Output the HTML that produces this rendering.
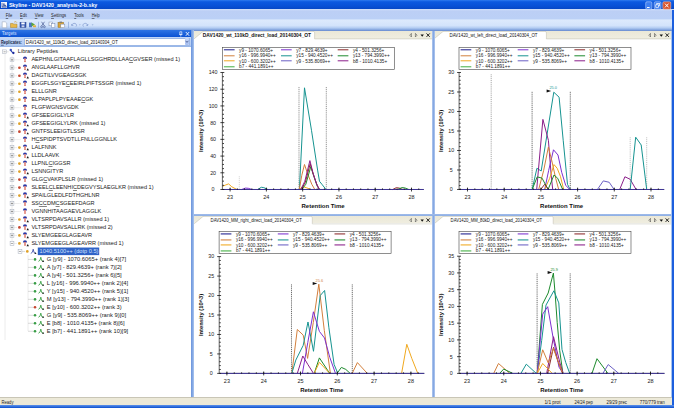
<!DOCTYPE html>
<html><head><meta charset="utf-8"><title>Skyline - DAV1420_analysis-2-b.sky</title>
<style>

html,body{margin:0;padding:0;}
body{width:674px;height:408px;overflow:hidden;background:#fff;font-family:"Liberation Sans", sans-serif;position:relative;}
.abs{position:absolute;}
.t{position:absolute;white-space:nowrap;line-height:1;color:#222;}
.t u{text-decoration-color:rgba(40,40,40,0.6);text-decoration-thickness:0.5px;}
#titlebar{left:0;top:0;width:674px;height:9.6px;background:linear-gradient(#2f7bef 0%,#0c59e0 18%,#0850d6 60%,#0644c0 100%);}
#menubar{left:0;top:9.4px;width:674px;height:9.6px;background:linear-gradient(#cfdef9 0%,#bccff5 22%,#bbd0f6 100%);}
#toolbar{left:0;top:18.8px;width:674px;height:12px;background:linear-gradient(#c6d9f8 0%,#dce9fc 10%,#d3e3fb 55%,#b3ccf2 74%,#84a5de 90%,#6589cf 100%);}
#tgt-head{left:0;top:30.3px;width:191.5px;height:6.7px;background:linear-gradient(#2f74e4,#0b52d3);}
#rep-row{left:0;top:37px;width:191.2px;height:9.7px;background:linear-gradient(#c3d7f7,#b5cdf3 80%,#8fb0e6);}
#combo{left:24px;top:37.7px;width:166px;height:8.2px;background:#fff;border:0.5px solid #9db8e6;box-sizing:border-box;}
#tree{left:0;top:46.5px;width:191px;height:350.5px;background:#fff;}
#vsplit{left:191.2px;top:30px;width:3.2px;height:367px;background:linear-gradient(90deg,#6a94dc,#8aade6 60%,#b0c9f0);}
#status{left:0;top:397px;width:671.5px;height:8.4px;background:#ece9d8;border-top:0.5px solid #c9c6b6;box-sizing:border-box;}
#botblue{left:0;top:405.3px;width:674px;height:2.7px;background:linear-gradient(#5f93ea,#0a4fd0);}
#rightblue{left:671.5px;top:10px;width:2.5px;height:398px;background:#1c5fde;}
.pane{background:#fff;}
.tabstrip{background:linear-gradient(#ebe8d7,#f0eee1);}

</style></head><body>
<div id="titlebar" class="abs"></div>
<div id="menubar" class="abs"></div>
<div id="toolbar" class="abs"></div>
<div id="rightblue" class="abs"></div>
<svg class="abs" style="left:0.9px;top:1.9px" width="6.2" height="5.8" viewBox="0 0 7.6 8" preserveAspectRatio="none"><rect x="0" y="0" width="7.6" height="8" fill="#f4f6fb"/><path d="M1.3 7 V1.2 M1.3 7 H6.8 M2.5 6.8 L3.6 2 L4.6 6 L5.4 4 L6.3 6.8" stroke="#1f3f94" stroke-width="0.9" fill="none"/></svg>
<svg class="abs" style="left:643px;top:0.5px" width="30" height="9" viewBox="0 0 30 9"><rect x="2.7" y="0.8" width="6.2" height="7.4" rx="1.2" fill="#3f7ff0" stroke="#cfdefc" stroke-width="0.5"/><rect x="4" y="6" width="2.6" height="1" fill="#fff"/><rect x="11.2" y="0.8" width="6.8" height="7.4" rx="1.2" fill="#3f7ff0" stroke="#cfdefc" stroke-width="0.5"/><rect x="13.8" y="2.4" width="2.8" height="2.5" fill="none" stroke="#fff" stroke-width="0.7"/><rect x="12.8" y="3.8" width="2.8" height="2.5" fill="#3f7ff0" stroke="#fff" stroke-width="0.7"/><rect x="19.8" y="0.8" width="8" height="7.4" rx="1.2" fill="#d9532c" stroke="#f6d9cf" stroke-width="0.5"/><path d="M22 2.6 L25.6 6.4 M25.6 2.6 L22 6.4" stroke="#fff" stroke-width="1"/></svg>
<svg class="abs" style="left:0;top:19px" width="110" height="11" viewBox="0 0 110 11"><g transform="translate(0,1.1) scale(1,0.84)"><path d="M2.2 2 h3 l1.5 1.5 v5.5 h-4.5z" fill="#fff" stroke="#8a97ad" stroke-width="0.5"/><path d="M10.5 4 h2.5 l0.8 0.8 h3.2 v4 h-6.5z" fill="#e9b94a" stroke="#a8781a" stroke-width="0.5"/><path d="M14 2.5 l2 -0.8 l1 1.5" stroke="#c8922a" stroke-width="0.6" fill="none"/><rect x="20" y="2.5" width="6" height="6.3" fill="#3659b4" stroke="#223a82" stroke-width="0.5"/><rect x="21.3" y="2.8" width="3.4" height="2.3" fill="#fff"/><rect x="21.6" y="6.3" width="2.8" height="2.2" fill="#cdd6ee"/><rect x="29" y="3" width="3" height="5.5" fill="#4a74c9"/><path d="M31.5 3 l3.5 2.2 l-3.5 2.5z" fill="#59a83a"/><rect x="33" y="6.2" width="3" height="2.3" fill="#e1b23c"/><rect x="38.4" y="2" width="0.6" height="7.5" fill="#7f9fd6"/><path d="M41.5 2 l3 5 M44.5 2 l-3 5" stroke="#3b4f8a" stroke-width="0.7"/><circle cx="41.6" cy="8" r="1" fill="none" stroke="#3b4f8a" stroke-width="0.6"/><circle cx="44.4" cy="8" r="1" fill="none" stroke="#3b4f8a" stroke-width="0.6"/><rect x="49" y="2.3" width="3.6" height="4.5" fill="#fff" stroke="#6d7fa8" stroke-width="0.5"/><rect x="51.3" y="4.2" width="3.6" height="4.5" fill="#fff" stroke="#6d7fa8" stroke-width="0.5"/><rect x="58" y="2.5" width="5.5" height="6.3" fill="#d9a63d" stroke="#8d6a1f" stroke-width="0.5"/><rect x="59.5" y="1.8" width="2.5" height="1.4" fill="#777"/><rect x="60.8" y="4.8" width="4" height="4.3" fill="#fff" stroke="#6d7fa8" stroke-width="0.5"/><rect x="68" y="2" width="0.6" height="7.5" fill="#7f9fd6"/><path d="M72 6.5 a2.3 2.3 0 1 1 4 1.2" stroke="#8aa3d3" stroke-width="0.9" fill="none"/><path d="M71 4.5 l0.6 2.6 l2.3 -1z" fill="#8aa3d3"/><path d="M78.8 5.2 h2 l-1 1.2z" fill="#8aa3d3"/><path d="M87.5 6.5 a2.3 2.3 0 1 0 -4 1.2" stroke="#8aa3d3" stroke-width="0.9" fill="none"/><path d="M88.5 4.5 l-0.6 2.6 l-2.3 -1z" fill="#8aa3d3"/><path d="M91.6 5.2 h2 l-1 1.2z" fill="#8aa3d3"/></g></svg>
<div id="tgt-head" class="abs"></div>
<svg class="abs" style="left:177px;top:30.5px" width="14" height="6" viewBox="0 0 14 6"><path d="M2.8 0.8 h2 v2.6 h-2z M2.2 3.5 h3.2 M3.8 3.5 v2" stroke="#e8f0ff" stroke-width="0.7" fill="none"/><path d="M8.8 1 l3.4 3.8 M12.2 1 l-3.4 3.8" stroke="#f4f8ff" stroke-width="0.9"/></svg>
<div id="rep-row" class="abs"></div>
<div id="combo" class="abs"></div>
<div class="abs" style="left:184.6px;top:38.4px;width:4.8px;height:6.8px;background:linear-gradient(#c9d9fa,#a4bdf0);border-radius:1px;"></div>
<svg class="abs" style="left:184px;top:38.4px" width="6" height="7" viewBox="0 0 6 7"><path d="M1.6 2.8 l1.4 1.6 l1.4 -1.6" stroke="#3a4f86" stroke-width="0.8" fill="none"/></svg>
<div id="tree" class="abs"></div>
<div id="vsplit" class="abs"></div>
<svg class="abs" style="left:0;top:46.5px" width="191" height="350" viewBox="0 46.5 191 350">
<g stroke="#b5b5b5" stroke-width="0.5" stroke-dasharray="0.5 0.5" fill="none">
<path d="M5 54 V339.5"/>
<path d="M12 56 V243"/>
<path d="M28 255 V331 "/>
</g>
<rect x="2.6999999999999997" y="49.4" width="3.8" height="3.8" fill="#fff" stroke="#a4abba" stroke-width="0.5"/>
<path d="M3.4999999999999996 51.3 H5.699999999999999" stroke="#555" stroke-width="0.5"/>
<path d="M6.6 51.3 H8.6" stroke="#c8c8c8" stroke-width="0.5"/>
<circle cx="10.8" cy="49.4" r="1.2" fill="#3a52c0"/><path d="M11 50.3 l2 2.2" stroke="#2a3fb0" stroke-width="1.1"/><circle cx="13.4" cy="52.5" r="1.15" fill="#1d2c9c"/>
<rect x="10.1" y="57.385" width="3.8" height="3.8" fill="#fff" stroke="#a4abba" stroke-width="0.5"/>
<path d="M10.9 59.285 H13.1" stroke="#555" stroke-width="0.5"/>
<path d="M12 58.184999999999995 V60.385" stroke="#555" stroke-width="0.5"/>
<path d="M14 59.285 H21" stroke="#c4c4c4" stroke-width="0.5" stroke-dasharray="0.6 0.5"/>
<path d="M22.9 58.385 Q22.9 56.084999999999994 25 56.084999999999994 Q27.1 56.084999999999994 27.1 58.385 Q25 57.684999999999995 22.9 58.385Z" fill="#2a36a4"/>
<rect x="24.3" y="57.985" width="1.4" height="3.6" fill="#d8594a"/>
<rect x="24.3" y="59.485" width="1.4" height="0.6" fill="#f6dcd6"/>
<rect x="10.1" y="65.36999999999999" width="3.8" height="3.8" fill="#fff" stroke="#a4abba" stroke-width="0.5"/>
<path d="M10.9 67.27 H13.1" stroke="#555" stroke-width="0.5"/>
<path d="M12 66.17 V68.36999999999999" stroke="#555" stroke-width="0.5"/>
<path d="M14 67.27 H17" stroke="#c4c4c4" stroke-width="0.5" stroke-dasharray="0.6 0.5"/>
<circle cx="19.4" cy="67.27" r="1.35" fill="#c4452f"/>
<path d="M22.9 66.36999999999999 Q22.9 64.07 25 64.07 Q27.1 64.07 27.1 66.36999999999999 Q25 65.67 22.9 66.36999999999999Z" fill="#2a36a4"/>
<rect x="24.3" y="65.97" width="1.4" height="3.6" fill="#d8594a"/>
<rect x="24.3" y="67.47" width="1.4" height="0.6" fill="#f6dcd6"/>
<path d="M26.5 69.97 l1.3 -2.2 l1.1 2.2z" fill="#111"/>
<rect x="10.1" y="73.35499999999999" width="3.8" height="3.8" fill="#fff" stroke="#a4abba" stroke-width="0.5"/>
<path d="M10.9 75.255 H13.1" stroke="#555" stroke-width="0.5"/>
<path d="M12 74.155 V76.35499999999999" stroke="#555" stroke-width="0.5"/>
<path d="M14 75.255 H17" stroke="#c4c4c4" stroke-width="0.5" stroke-dasharray="0.6 0.5"/>
<circle cx="19.4" cy="75.255" r="1.35" fill="#c4452f"/>
<path d="M22.9 74.35499999999999 Q22.9 72.05499999999999 25 72.05499999999999 Q27.1 72.05499999999999 27.1 74.35499999999999 Q25 73.655 22.9 74.35499999999999Z" fill="#2a36a4"/>
<rect x="24.3" y="73.955" width="1.4" height="3.6" fill="#d8594a"/>
<rect x="24.3" y="75.455" width="1.4" height="0.6" fill="#f6dcd6"/>
<path d="M26.5 77.955 l1.3 -2.2 l1.1 2.2z" fill="#111"/>
<rect x="10.1" y="81.33999999999999" width="3.8" height="3.8" fill="#fff" stroke="#a4abba" stroke-width="0.5"/>
<path d="M10.9 83.24 H13.1" stroke="#555" stroke-width="0.5"/>
<path d="M12 82.14 V84.33999999999999" stroke="#555" stroke-width="0.5"/>
<path d="M14 83.24 H17" stroke="#c4c4c4" stroke-width="0.5" stroke-dasharray="0.6 0.5"/>
<circle cx="19.4" cy="83.24" r="1.35" fill="#dfa128"/>
<path d="M22.9 82.33999999999999 Q22.9 80.03999999999999 25 80.03999999999999 Q27.1 80.03999999999999 27.1 82.33999999999999 Q25 81.64 22.9 82.33999999999999Z" fill="#2a36a4"/>
<rect x="24.3" y="81.94" width="1.4" height="3.6" fill="#d8594a"/>
<rect x="24.3" y="83.44" width="1.4" height="0.6" fill="#f6dcd6"/>
<rect x="10.1" y="89.32499999999999" width="3.8" height="3.8" fill="#fff" stroke="#a4abba" stroke-width="0.5"/>
<path d="M10.9 91.225 H13.1" stroke="#555" stroke-width="0.5"/>
<path d="M12 90.125 V92.32499999999999" stroke="#555" stroke-width="0.5"/>
<path d="M14 91.225 H17" stroke="#c4c4c4" stroke-width="0.5" stroke-dasharray="0.6 0.5"/>
<circle cx="19.4" cy="91.225" r="1.35" fill="#dfa128"/>
<path d="M22.9 90.32499999999999 Q22.9 88.02499999999999 25 88.02499999999999 Q27.1 88.02499999999999 27.1 90.32499999999999 Q25 89.625 22.9 90.32499999999999Z" fill="#2a36a4"/>
<rect x="24.3" y="89.925" width="1.4" height="3.6" fill="#d8594a"/>
<rect x="24.3" y="91.425" width="1.4" height="0.6" fill="#f6dcd6"/>
<rect x="10.1" y="97.31" width="3.8" height="3.8" fill="#fff" stroke="#a4abba" stroke-width="0.5"/>
<path d="M10.9 99.21000000000001 H13.1" stroke="#555" stroke-width="0.5"/>
<path d="M12 98.11000000000001 V100.31" stroke="#555" stroke-width="0.5"/>
<path d="M14 99.21000000000001 H17" stroke="#c4c4c4" stroke-width="0.5" stroke-dasharray="0.6 0.5"/>
<circle cx="19.4" cy="99.21000000000001" r="1.35" fill="#dfa128"/>
<path d="M22.9 98.31 Q22.9 96.01 25 96.01 Q27.1 96.01 27.1 98.31 Q25 97.61000000000001 22.9 98.31Z" fill="#2a36a4"/>
<rect x="24.3" y="97.91000000000001" width="1.4" height="3.6" fill="#d8594a"/>
<rect x="24.3" y="99.41000000000001" width="1.4" height="0.6" fill="#f6dcd6"/>
<rect x="10.1" y="105.29499999999999" width="3.8" height="3.8" fill="#fff" stroke="#a4abba" stroke-width="0.5"/>
<path d="M10.9 107.195 H13.1" stroke="#555" stroke-width="0.5"/>
<path d="M12 106.095 V108.29499999999999" stroke="#555" stroke-width="0.5"/>
<path d="M14 107.195 H21" stroke="#c4c4c4" stroke-width="0.5" stroke-dasharray="0.6 0.5"/>
<path d="M22.9 106.29499999999999 Q22.9 103.99499999999999 25 103.99499999999999 Q27.1 103.99499999999999 27.1 106.29499999999999 Q25 105.595 22.9 106.29499999999999Z" fill="#2a36a4"/>
<rect x="24.3" y="105.895" width="1.4" height="3.6" fill="#d8594a"/>
<rect x="24.3" y="107.395" width="1.4" height="0.6" fill="#f6dcd6"/>
<rect x="10.1" y="113.28" width="3.8" height="3.8" fill="#fff" stroke="#a4abba" stroke-width="0.5"/>
<path d="M10.9 115.18 H13.1" stroke="#555" stroke-width="0.5"/>
<path d="M12 114.08000000000001 V116.28" stroke="#555" stroke-width="0.5"/>
<path d="M14 115.18 H17" stroke="#c4c4c4" stroke-width="0.5" stroke-dasharray="0.6 0.5"/>
<circle cx="19.4" cy="115.18" r="1.35" fill="#dfa128"/>
<path d="M22.9 114.28 Q22.9 111.98 25 111.98 Q27.1 111.98 27.1 114.28 Q25 113.58000000000001 22.9 114.28Z" fill="#2a36a4"/>
<rect x="24.3" y="113.88000000000001" width="1.4" height="3.6" fill="#d8594a"/>
<rect x="24.3" y="115.38000000000001" width="1.4" height="0.6" fill="#f6dcd6"/>
<path d="M26.5 117.88000000000001 l1.3 -2.2 l1.1 2.2z" fill="#111"/>
<rect x="10.1" y="121.265" width="3.8" height="3.8" fill="#fff" stroke="#a4abba" stroke-width="0.5"/>
<path d="M10.9 123.165 H13.1" stroke="#555" stroke-width="0.5"/>
<path d="M12 122.06500000000001 V124.265" stroke="#555" stroke-width="0.5"/>
<path d="M14 123.165 H17" stroke="#c4c4c4" stroke-width="0.5" stroke-dasharray="0.6 0.5"/>
<circle cx="19.4" cy="123.165" r="1.35" fill="#dfa128"/>
<path d="M22.9 122.265 Q22.9 119.965 25 119.965 Q27.1 119.965 27.1 122.265 Q25 121.56500000000001 22.9 122.265Z" fill="#2a36a4"/>
<rect x="24.3" y="121.86500000000001" width="1.4" height="3.6" fill="#d8594a"/>
<rect x="24.3" y="123.36500000000001" width="1.4" height="0.6" fill="#f6dcd6"/>
<path d="M26.5 125.86500000000001 l1.3 -2.2 l1.1 2.2z" fill="#111"/>
<rect x="10.1" y="129.25" width="3.8" height="3.8" fill="#fff" stroke="#a4abba" stroke-width="0.5"/>
<path d="M10.9 131.15 H13.1" stroke="#555" stroke-width="0.5"/>
<path d="M12 130.05 V132.25" stroke="#555" stroke-width="0.5"/>
<path d="M14 131.15 H17" stroke="#c4c4c4" stroke-width="0.5" stroke-dasharray="0.6 0.5"/>
<circle cx="19.4" cy="131.15" r="1.35" fill="#c4452f"/>
<path d="M22.9 130.25 Q22.9 127.95 25 127.95 Q27.1 127.95 27.1 130.25 Q25 129.55 22.9 130.25Z" fill="#2a36a4"/>
<rect x="24.3" y="129.85" width="1.4" height="3.6" fill="#d8594a"/>
<rect x="24.3" y="131.35" width="1.4" height="0.6" fill="#f6dcd6"/>
<path d="M26.5 133.85 l1.3 -2.2 l1.1 2.2z" fill="#111"/>
<rect x="10.1" y="137.23499999999999" width="3.8" height="3.8" fill="#fff" stroke="#a4abba" stroke-width="0.5"/>
<path d="M10.9 139.135 H13.1" stroke="#555" stroke-width="0.5"/>
<path d="M12 138.035 V140.23499999999999" stroke="#555" stroke-width="0.5"/>
<path d="M14 139.135 H21" stroke="#c4c4c4" stroke-width="0.5" stroke-dasharray="0.6 0.5"/>
<path d="M22.9 138.23499999999999 Q22.9 135.935 25 135.935 Q27.1 135.935 27.1 138.23499999999999 Q25 137.535 22.9 138.23499999999999Z" fill="#2a36a4"/>
<rect x="24.3" y="137.83499999999998" width="1.4" height="3.6" fill="#d8594a"/>
<rect x="24.3" y="139.33499999999998" width="1.4" height="0.6" fill="#f6dcd6"/>
<rect x="10.1" y="145.22" width="3.8" height="3.8" fill="#fff" stroke="#a4abba" stroke-width="0.5"/>
<path d="M10.9 147.12 H13.1" stroke="#555" stroke-width="0.5"/>
<path d="M12 146.02 V148.22" stroke="#555" stroke-width="0.5"/>
<path d="M14 147.12 H17" stroke="#c4c4c4" stroke-width="0.5" stroke-dasharray="0.6 0.5"/>
<circle cx="19.4" cy="147.12" r="1.35" fill="#dfa128"/>
<path d="M22.9 146.22 Q22.9 143.92000000000002 25 143.92000000000002 Q27.1 143.92000000000002 27.1 146.22 Q25 145.52 22.9 146.22Z" fill="#2a36a4"/>
<rect x="24.3" y="145.82" width="1.4" height="3.6" fill="#d8594a"/>
<rect x="24.3" y="147.32" width="1.4" height="0.6" fill="#f6dcd6"/>
<path d="M26.5 149.82 l1.3 -2.2 l1.1 2.2z" fill="#111"/>
<rect x="10.1" y="153.205" width="3.8" height="3.8" fill="#fff" stroke="#a4abba" stroke-width="0.5"/>
<path d="M10.9 155.10500000000002 H13.1" stroke="#555" stroke-width="0.5"/>
<path d="M12 154.00500000000002 V156.205" stroke="#555" stroke-width="0.5"/>
<path d="M14 155.10500000000002 H17" stroke="#c4c4c4" stroke-width="0.5" stroke-dasharray="0.6 0.5"/>
<circle cx="19.4" cy="155.10500000000002" r="1.35" fill="#dfa128"/>
<path d="M22.9 154.205 Q22.9 151.90500000000003 25 151.90500000000003 Q27.1 151.90500000000003 27.1 154.205 Q25 153.50500000000002 22.9 154.205Z" fill="#2a36a4"/>
<rect x="24.3" y="153.805" width="1.4" height="3.6" fill="#d8594a"/>
<rect x="24.3" y="155.305" width="1.4" height="0.6" fill="#f6dcd6"/>
<path d="M26.5 157.805 l1.3 -2.2 l1.1 2.2z" fill="#111"/>
<rect x="10.1" y="161.19" width="3.8" height="3.8" fill="#fff" stroke="#a4abba" stroke-width="0.5"/>
<path d="M10.9 163.09 H13.1" stroke="#555" stroke-width="0.5"/>
<path d="M12 161.99 V164.19" stroke="#555" stroke-width="0.5"/>
<path d="M14 163.09 H17" stroke="#c4c4c4" stroke-width="0.5" stroke-dasharray="0.6 0.5"/>
<circle cx="19.4" cy="163.09" r="1.35" fill="#dfa128"/>
<path d="M22.9 162.19 Q22.9 159.89000000000001 25 159.89000000000001 Q27.1 159.89000000000001 27.1 162.19 Q25 161.49 22.9 162.19Z" fill="#2a36a4"/>
<rect x="24.3" y="161.79" width="1.4" height="3.6" fill="#d8594a"/>
<rect x="24.3" y="163.29" width="1.4" height="0.6" fill="#f6dcd6"/>
<rect x="10.1" y="169.17499999999998" width="3.8" height="3.8" fill="#fff" stroke="#a4abba" stroke-width="0.5"/>
<path d="M10.9 171.075 H13.1" stroke="#555" stroke-width="0.5"/>
<path d="M12 169.975 V172.17499999999998" stroke="#555" stroke-width="0.5"/>
<path d="M14 171.075 H17" stroke="#c4c4c4" stroke-width="0.5" stroke-dasharray="0.6 0.5"/>
<circle cx="19.4" cy="171.075" r="1.35" fill="#dfa128"/>
<path d="M22.9 170.17499999999998 Q22.9 167.875 25 167.875 Q27.1 167.875 27.1 170.17499999999998 Q25 169.475 22.9 170.17499999999998Z" fill="#2a36a4"/>
<rect x="24.3" y="169.77499999999998" width="1.4" height="3.6" fill="#d8594a"/>
<rect x="24.3" y="171.27499999999998" width="1.4" height="0.6" fill="#f6dcd6"/>
<path d="M26.5 173.77499999999998 l1.3 -2.2 l1.1 2.2z" fill="#111"/>
<rect x="10.1" y="177.16" width="3.8" height="3.8" fill="#fff" stroke="#a4abba" stroke-width="0.5"/>
<path d="M10.9 179.06 H13.1" stroke="#555" stroke-width="0.5"/>
<path d="M12 177.96 V180.16" stroke="#555" stroke-width="0.5"/>
<path d="M14 179.06 H17" stroke="#c4c4c4" stroke-width="0.5" stroke-dasharray="0.6 0.5"/>
<circle cx="19.4" cy="179.06" r="1.35" fill="#c4452f"/>
<path d="M22.9 178.16 Q22.9 175.86 25 175.86 Q27.1 175.86 27.1 178.16 Q25 177.46 22.9 178.16Z" fill="#2a36a4"/>
<rect x="24.3" y="177.76" width="1.4" height="3.6" fill="#d8594a"/>
<rect x="24.3" y="179.26" width="1.4" height="0.6" fill="#f6dcd6"/>
<rect x="10.1" y="185.145" width="3.8" height="3.8" fill="#fff" stroke="#a4abba" stroke-width="0.5"/>
<path d="M10.9 187.04500000000002 H13.1" stroke="#555" stroke-width="0.5"/>
<path d="M12 185.94500000000002 V188.145" stroke="#555" stroke-width="0.5"/>
<path d="M14 187.04500000000002 H17" stroke="#c4c4c4" stroke-width="0.5" stroke-dasharray="0.6 0.5"/>
<circle cx="19.4" cy="187.04500000000002" r="1.35" fill="#c4452f"/>
<path d="M22.9 186.145 Q22.9 183.84500000000003 25 183.84500000000003 Q27.1 183.84500000000003 27.1 186.145 Q25 185.44500000000002 22.9 186.145Z" fill="#2a36a4"/>
<rect x="24.3" y="185.745" width="1.4" height="3.6" fill="#d8594a"/>
<rect x="24.3" y="187.245" width="1.4" height="0.6" fill="#f6dcd6"/>
<rect x="10.1" y="193.13000000000002" width="3.8" height="3.8" fill="#fff" stroke="#a4abba" stroke-width="0.5"/>
<path d="M10.9 195.03000000000003 H13.1" stroke="#555" stroke-width="0.5"/>
<path d="M12 193.93000000000004 V196.13000000000002" stroke="#555" stroke-width="0.5"/>
<path d="M14 195.03000000000003 H17" stroke="#c4c4c4" stroke-width="0.5" stroke-dasharray="0.6 0.5"/>
<circle cx="19.4" cy="195.03000000000003" r="1.35" fill="#dfa128"/>
<path d="M22.9 194.13000000000002 Q22.9 191.83000000000004 25 191.83000000000004 Q27.1 191.83000000000004 27.1 194.13000000000002 Q25 193.43000000000004 22.9 194.13000000000002Z" fill="#2a36a4"/>
<rect x="24.3" y="193.73000000000002" width="1.4" height="3.6" fill="#d8594a"/>
<rect x="24.3" y="195.23000000000002" width="1.4" height="0.6" fill="#f6dcd6"/>
<path d="M26.5 197.73000000000002 l1.3 -2.2 l1.1 2.2z" fill="#111"/>
<rect x="10.1" y="201.11499999999998" width="3.8" height="3.8" fill="#fff" stroke="#a4abba" stroke-width="0.5"/>
<path d="M10.9 203.015 H13.1" stroke="#555" stroke-width="0.5"/>
<path d="M12 201.915 V204.11499999999998" stroke="#555" stroke-width="0.5"/>
<path d="M14 203.015 H21" stroke="#c4c4c4" stroke-width="0.5" stroke-dasharray="0.6 0.5"/>
<path d="M22.9 202.11499999999998 Q22.9 199.815 25 199.815 Q27.1 199.815 27.1 202.11499999999998 Q25 201.415 22.9 202.11499999999998Z" fill="#2a36a4"/>
<rect x="24.3" y="201.71499999999997" width="1.4" height="3.6" fill="#d8594a"/>
<rect x="24.3" y="203.21499999999997" width="1.4" height="0.6" fill="#f6dcd6"/>
<rect x="10.1" y="209.1" width="3.8" height="3.8" fill="#fff" stroke="#a4abba" stroke-width="0.5"/>
<path d="M10.9 211.0 H13.1" stroke="#555" stroke-width="0.5"/>
<path d="M12 209.9 V212.1" stroke="#555" stroke-width="0.5"/>
<path d="M14 211.0 H21" stroke="#c4c4c4" stroke-width="0.5" stroke-dasharray="0.6 0.5"/>
<path d="M22.9 210.1 Q22.9 207.8 25 207.8 Q27.1 207.8 27.1 210.1 Q25 209.4 22.9 210.1Z" fill="#2a36a4"/>
<rect x="24.3" y="209.7" width="1.4" height="3.6" fill="#d8594a"/>
<rect x="24.3" y="211.2" width="1.4" height="0.6" fill="#f6dcd6"/>
<rect x="10.1" y="217.085" width="3.8" height="3.8" fill="#fff" stroke="#a4abba" stroke-width="0.5"/>
<path d="M10.9 218.985 H13.1" stroke="#555" stroke-width="0.5"/>
<path d="M12 217.88500000000002 V220.085" stroke="#555" stroke-width="0.5"/>
<path d="M14 218.985 H17" stroke="#c4c4c4" stroke-width="0.5" stroke-dasharray="0.6 0.5"/>
<circle cx="19.4" cy="218.985" r="1.35" fill="#dfa128"/>
<path d="M22.9 218.085 Q22.9 215.78500000000003 25 215.78500000000003 Q27.1 215.78500000000003 27.1 218.085 Q25 217.38500000000002 22.9 218.085Z" fill="#2a36a4"/>
<rect x="24.3" y="217.685" width="1.4" height="3.6" fill="#d8594a"/>
<rect x="24.3" y="219.185" width="1.4" height="0.6" fill="#f6dcd6"/>
<path d="M26.5 221.685 l1.3 -2.2 l1.1 2.2z" fill="#111"/>
<rect x="10.1" y="225.07000000000002" width="3.8" height="3.8" fill="#fff" stroke="#a4abba" stroke-width="0.5"/>
<path d="M10.9 226.97000000000003 H13.1" stroke="#555" stroke-width="0.5"/>
<path d="M12 225.87000000000003 V228.07000000000002" stroke="#555" stroke-width="0.5"/>
<path d="M14 226.97000000000003 H17" stroke="#c4c4c4" stroke-width="0.5" stroke-dasharray="0.6 0.5"/>
<circle cx="19.4" cy="226.97000000000003" r="1.35" fill="#c4452f"/>
<path d="M22.9 226.07000000000002 Q22.9 223.77000000000004 25 223.77000000000004 Q27.1 223.77000000000004 27.1 226.07000000000002 Q25 225.37000000000003 22.9 226.07000000000002Z" fill="#2a36a4"/>
<rect x="24.3" y="225.67000000000002" width="1.4" height="3.6" fill="#d8594a"/>
<rect x="24.3" y="227.17000000000002" width="1.4" height="0.6" fill="#f6dcd6"/>
<path d="M26.5 229.67000000000002 l1.3 -2.2 l1.1 2.2z" fill="#111"/>
<rect x="10.1" y="233.05499999999998" width="3.8" height="3.8" fill="#fff" stroke="#a4abba" stroke-width="0.5"/>
<path d="M10.9 234.95499999999998 H13.1" stroke="#555" stroke-width="0.5"/>
<path d="M12 233.855 V236.05499999999998" stroke="#555" stroke-width="0.5"/>
<path d="M14 234.95499999999998 H17" stroke="#c4c4c4" stroke-width="0.5" stroke-dasharray="0.6 0.5"/>
<circle cx="19.4" cy="234.95499999999998" r="1.35" fill="#dfa128"/>
<path d="M22.9 234.05499999999998 Q22.9 231.755 25 231.755 Q27.1 231.755 27.1 234.05499999999998 Q25 233.355 22.9 234.05499999999998Z" fill="#2a36a4"/>
<rect x="24.3" y="233.65499999999997" width="1.4" height="3.6" fill="#d8594a"/>
<rect x="24.3" y="235.15499999999997" width="1.4" height="0.6" fill="#f6dcd6"/>
<path d="M26.5 237.65499999999997 l1.3 -2.2 l1.1 2.2z" fill="#111"/>
<rect x="10.1" y="241.04" width="3.8" height="3.8" fill="#fff" stroke="#a4abba" stroke-width="0.5"/>
<path d="M10.9 242.94 H13.1" stroke="#555" stroke-width="0.5"/>
<path d="M14 242.94 H17" stroke="#c4c4c4" stroke-width="0.5" stroke-dasharray="0.6 0.5"/>
<circle cx="19.4" cy="242.94" r="1.35" fill="#dfa128"/>
<path d="M22.9 242.04 Q22.9 239.74 25 239.74 Q27.1 239.74 27.1 242.04 Q25 241.34 22.9 242.04Z" fill="#2a36a4"/>
<rect x="24.3" y="241.64" width="1.4" height="3.6" fill="#d8594a"/>
<rect x="24.3" y="243.14" width="1.4" height="0.6" fill="#f6dcd6"/>
<path d="M26.5 245.64 l1.3 -2.2 l1.1 2.2z" fill="#111"/>
<rect x="18.1" y="249.025" width="3.8" height="3.8" fill="#fff" stroke="#a4abba" stroke-width="0.5"/>
<path d="M18.9 250.925 H21.1" stroke="#555" stroke-width="0.5"/>
<path d="M22 250.925 H25" stroke="#b5b5b5" stroke-width="0.5"/>
<circle cx="27.3" cy="250.925" r="1.35" fill="#dfa128"/>
<path d="M30.799999999999997 252.925 L32.4 251.72500000000002 L33.199999999999996 248.72500000000002 L34.1 252.125 L36.0 252.925" stroke="#2c3ea0" stroke-width="0.8" fill="none"/>
<path d="M34.4 253.425 l1.1 -1.8 l1 1.8z" fill="#222"/>
<rect x="37.8" y="247.025" width="61.4" height="7.6" fill="#2f62c6"/>
<path d="M28 258.91 H33" stroke="#b5b5b5" stroke-width="0.5"/>
<circle cx="35" cy="258.91" r="1.3" fill="#379c45"/>
<path d="M38.4 260.91 L40 259.71000000000004 L40.8 256.71000000000004 L41.7 260.11 L43.6 260.91" stroke="#2f9a3a" stroke-width="0.8" fill="none"/>
<path d="M42 261.41 l1.1 -1.8 l1 1.8z" fill="#222"/>
<path d="M28 266.895 H33" stroke="#b5b5b5" stroke-width="0.5"/>
<circle cx="35" cy="266.895" r="1.3" fill="#379c45"/>
<path d="M38.4 268.895 L40 267.695 L40.8 264.695 L41.7 268.09499999999997 L43.6 268.895" stroke="#2f9a3a" stroke-width="0.8" fill="none"/>
<path d="M42 269.395 l1.1 -1.8 l1 1.8z" fill="#222"/>
<path d="M28 274.88 H33" stroke="#b5b5b5" stroke-width="0.5"/>
<circle cx="35" cy="274.88" r="1.3" fill="#379c45"/>
<path d="M38.4 276.88 L40 275.68 L40.8 272.68 L41.7 276.08 L43.6 276.88" stroke="#2f9a3a" stroke-width="0.8" fill="none"/>
<path d="M42 277.38 l1.1 -1.8 l1 1.8z" fill="#222"/>
<path d="M28 282.865 H33" stroke="#b5b5b5" stroke-width="0.5"/>
<circle cx="35" cy="282.865" r="1.3" fill="#379c45"/>
<path d="M38.4 284.865 L40 283.665 L40.8 280.665 L41.7 284.065 L43.6 284.865" stroke="#2f9a3a" stroke-width="0.8" fill="none"/>
<path d="M42 285.365 l1.1 -1.8 l1 1.8z" fill="#222"/>
<path d="M28 290.85 H33" stroke="#b5b5b5" stroke-width="0.5"/>
<circle cx="35" cy="290.85" r="1.3" fill="#379c45"/>
<path d="M38.4 292.85 L40 291.65000000000003 L40.8 288.65000000000003 L41.7 292.05 L43.6 292.85" stroke="#2f9a3a" stroke-width="0.8" fill="none"/>
<path d="M42 293.35 l1.1 -1.8 l1 1.8z" fill="#222"/>
<path d="M28 298.835 H33" stroke="#b5b5b5" stroke-width="0.5"/>
<circle cx="35" cy="298.835" r="1.3" fill="#379c45"/>
<path d="M38.4 300.835 L40 299.635 L40.8 296.635 L41.7 300.03499999999997 L43.6 300.835" stroke="#2f9a3a" stroke-width="0.8" fill="none"/>
<path d="M42 301.335 l1.1 -1.8 l1 1.8z" fill="#222"/>
<path d="M28 306.82 H33" stroke="#b5b5b5" stroke-width="0.5"/>
<circle cx="35" cy="306.82" r="1.3" fill="#c4452f"/>
<path d="M38.4 308.82 L40 307.62 L40.8 304.62 L41.7 308.02 L43.6 308.82" stroke="#2f9a3a" stroke-width="0.8" fill="none"/>
<path d="M42 309.32 l1.1 -1.8 l1 1.8z" fill="#222"/>
<path d="M28 314.805 H33" stroke="#b5b5b5" stroke-width="0.5"/>
<circle cx="35" cy="314.805" r="1.3" fill="#379c45"/>
<path d="M38.4 316.805 L40 315.605 L40.8 312.605 L41.7 316.005 L43.6 316.805" stroke="#2f9a3a" stroke-width="0.8" fill="none"/>
<path d="M42 317.305 l1.1 -1.8 l1 1.8z" fill="#222"/>
<path d="M28 322.79 H33" stroke="#b5b5b5" stroke-width="0.5"/>
<circle cx="35" cy="322.79" r="1.3" fill="#379c45"/>
<path d="M38.4 324.79 L40 323.59000000000003 L40.8 320.59000000000003 L41.7 323.99 L43.6 324.79" stroke="#2f9a3a" stroke-width="0.8" fill="none"/>
<path d="M42 325.29 l1.1 -1.8 l1 1.8z" fill="#222"/>
<path d="M28 330.77500000000003 H33" stroke="#b5b5b5" stroke-width="0.5"/>
<circle cx="35" cy="330.77500000000003" r="1.3" fill="#379c45"/>
<path d="M38.4 332.77500000000003 L40 331.57500000000005 L40.8 328.57500000000005 L41.7 331.975 L43.6 332.77500000000003" stroke="#2f9a3a" stroke-width="0.8" fill="none"/>
<path d="M42 333.27500000000003 l1.1 -1.8 l1 1.8z" fill="#222"/>
</svg>
<div id="status" class="abs"></div>
<div id="botblue" class="abs"></div>
<div class="abs tabstrip" style="left:194.2px;top:30.7px;width:238.3px;height:8.2px;"></div>
<div class="abs pane" style="left:194.2px;top:38.5px;width:238.3px;height:174.79999999999998px;"></div>
<svg class="abs" style="left:194.2px;top:30.7px" width="238.3" height="182.6" viewBox="194.2 30.7 238.3 182.6">
<path d="M194.2 38.6 L194.2 38.6 L202.6 31.7 Q203.2 31.099999999999998 204.2 31.099999999999998 L313.3 31.099999999999998 Q314.8 31.099999999999998 314.8 32.4 L314.8 38.6 L432.5 38.6 L432.5 39.3 L194.2 39.3Z" fill="#fff"/>
<path d="M194.2 38.6 L194.2 38.6 L202.6 31.7 Q203.2 31.099999999999998 204.2 31.099999999999998 L313.3 31.099999999999998 Q314.8 31.099999999999998 314.8 32.4 L314.8 38.6 L432.5 38.6" fill="none" stroke="#bdbaa9" stroke-width="0.5"/>
<path d="M409.9 34.9 l1.7 -1.8 v3.6z M417.3 34.9 l-1.7 -1.8 v3.6z" fill="none" stroke="#444" stroke-width="0.55"/>
<path d="M420.7 34.3 h3.4 l-1.7 2.1z" fill="#111"/>
<path d="M426.7 33.1 l3.3 3.5 M430.0 33.1 l-3.3 3.5" stroke="#111" stroke-width="0.9"/>
<rect x="222.5" y="47.2" width="172" height="22" fill="#fff" stroke="#444" stroke-width="0.6"/>
<path d="M224.1 49.5 H234.8" stroke="#1a1a8c" stroke-width="1" opacity="1"/>
<text x="239.3" y="51.35" font-size="4.7" fill="#222">y9 - 1070.6065+</text>
<path d="M281.20000000000005 49.5 H291.90000000000003" stroke="#7b2fd0" stroke-width="1" opacity="1"/>
<text x="296.40000000000003" y="51.35" font-size="4.7" fill="#222">y7 - 829.4639+</text>
<path d="M337.90000000000003 49.5 H348.6" stroke="#8b2a2a" stroke-width="1" opacity="1"/>
<text x="353.1" y="51.35" font-size="4.7" fill="#222">y4 - 501.3256+</text>
<path d="M224.1 55.5 H234.8" stroke="#d2803c" stroke-width="1" opacity="1"/>
<text x="239.3" y="56.800000000000004" font-size="4.7" fill="#222">y16 - 996.9940++</text>
<path d="M281.20000000000005 55.5 H291.90000000000003" stroke="#159390" stroke-width="1" opacity="1"/>
<text x="296.40000000000003" y="56.800000000000004" font-size="4.7" fill="#222">y15 - 940.4520++</text>
<path d="M337.90000000000003 55.5 H348.6" stroke="#1c8a2c" stroke-width="1" opacity="1"/>
<text x="353.1" y="56.800000000000004" font-size="4.7" fill="#222">y13 - 794.3990++</text>
<path d="M224.1 60.5 H234.8" stroke="#f0a81e" stroke-width="1" opacity="1"/>
<text x="239.3" y="62.25" font-size="4.7" fill="#222">y10 - 600.3202++</text>
<path d="M281.20000000000005 60.5 H291.90000000000003" stroke="#6a5fc4" stroke-width="1" opacity="1"/>
<text x="296.40000000000003" y="62.25" font-size="4.7" fill="#222">y9 - 535.8069++</text>
<path d="M337.90000000000003 60.5 H348.6" stroke="#8a1d8a" stroke-width="1" opacity="1"/>
<text x="353.1" y="62.25" font-size="4.7" fill="#222">b8 - 1010.4135+</text>
<path d="M224.1 66.5 H234.8" stroke="#3fae3f" stroke-width="1" opacity="1"/>
<text x="239.3" y="67.70000000000002" font-size="4.7" fill="#222">b7 - 441.1891++</text>
<path d="M299.2 86.7 V189.2" stroke="#6e6e6e" stroke-width="0.75" stroke-dasharray="1.1 0.8"/>
<path d="M326.5 86.7 V189.2" stroke="#6e6e6e" stroke-width="0.75" stroke-dasharray="1.1 0.8"/>
<path d="M239.5 176 V189.2" stroke="#aaa" stroke-width="0.55" stroke-dasharray="1 0.9"/>
<path d="M222.8 186.0 L225.5 184.8 L228.8 183.6 L232.0 186.5 L237.0 189.2" stroke="#f0a81e" stroke-width="1" fill="none" stroke-linejoin="round"/>
<path d="M242.0 189.2 L245.5 187.8 L248.5 188.0 L252.0 189.2" stroke="#7b2fd0" stroke-width="1" fill="none" stroke-linejoin="round"/>
<path d="M258.0 189.2 L261.5 187.0 L264.0 187.3 L268.0 189.2" stroke="#159390" stroke-width="1" fill="none" stroke-linejoin="round"/>
<path d="M299.6 189.2 L304.7 87.5 L311.7 130.0 L317.8 169.8 L319.7 181.0 L322.5 184.5 L326.2 189.2" stroke="#159390" stroke-width="1" fill="none" stroke-linejoin="round"/>
<path d="M299.5 189.2 L302.0 175.0 L304.7 164.2 L308.0 174.0 L312.0 184.0 L315.0 189.2" stroke="#d2803c" stroke-width="1" fill="none" stroke-linejoin="round"/>
<path d="M299.5 189.2 L303.0 186.2 L307.0 187.6 L311.0 189.2" stroke="#f0a81e" stroke-width="1" fill="none" stroke-linejoin="round"/>
<path d="M302.0 189.2 L306.0 184.0 L311.0 166.3 L314.0 176.0 L317.5 186.0 L320.0 189.2" stroke="#1c8a2c" stroke-width="1" fill="none" stroke-linejoin="round"/>
<path d="M301.5 189.2 L305.5 182.0 L310.4 163.5 L313.5 174.0 L317.0 184.0 L319.5 189.2" stroke="#8b2a2a" stroke-width="1" fill="none" stroke-linejoin="round"/>
<path d="M301.0 189.2 L305.0 181.0 L310.1 160.3 L313.0 172.0 L316.5 183.0 L319.4 189.2" stroke="#8a1d8a" stroke-width="1" fill="none" stroke-linejoin="round"/>
<path d="M393.0 189.2 L396.5 187.4 L399.5 187.8 L403.0 189.2" stroke="#8b2a2a" stroke-width="1" fill="none" stroke-linejoin="round"/>
<path d="M398.0 189.2 L402.0 187.3 L405.0 187.6 L409.0 189.2" stroke="#1c8a2c" stroke-width="1" fill="none" stroke-linejoin="round"/>
<path d="M222.6 72.2 V189.2 H424" stroke="#222" stroke-width="0.7" fill="none"/>
<path d="M223.1 189.2 H424" stroke="#3a2f9a" stroke-width="0.9" fill="none"/>
<path d="M220.6 189.20 H224.5" stroke="#111" stroke-width="0.8"/>
<text x="213.3" y="191.10" font-size="5.3" fill="#222" text-anchor="middle">0</text>
<path d="M222.6 185.02 H224.2" stroke="#111" stroke-width="0.8"/>
<path d="M222.6 180.84 H224.2" stroke="#111" stroke-width="0.8"/>
<path d="M222.6 176.66 H224.2" stroke="#111" stroke-width="0.8"/>
<path d="M220.6 172.49 H224.5" stroke="#111" stroke-width="0.8"/>
<text x="213.3" y="174.39" font-size="5.3" fill="#222" text-anchor="middle">20</text>
<path d="M222.6 168.31 H224.2" stroke="#111" stroke-width="0.8"/>
<path d="M222.6 164.13 H224.2" stroke="#111" stroke-width="0.8"/>
<path d="M222.6 159.95 H224.2" stroke="#111" stroke-width="0.8"/>
<path d="M220.6 155.77 H224.5" stroke="#111" stroke-width="0.8"/>
<text x="213.3" y="157.67" font-size="5.3" fill="#222" text-anchor="middle">40</text>
<path d="M222.6 151.59 H224.2" stroke="#111" stroke-width="0.8"/>
<path d="M222.6 147.41 H224.2" stroke="#111" stroke-width="0.8"/>
<path d="M222.6 143.24 H224.2" stroke="#111" stroke-width="0.8"/>
<path d="M220.6 139.06 H224.5" stroke="#111" stroke-width="0.8"/>
<text x="213.3" y="140.96" font-size="5.3" fill="#222" text-anchor="middle">60</text>
<path d="M222.6 134.88 H224.2" stroke="#111" stroke-width="0.8"/>
<path d="M222.6 130.70 H224.2" stroke="#111" stroke-width="0.8"/>
<path d="M222.6 126.52 H224.2" stroke="#111" stroke-width="0.8"/>
<path d="M220.6 122.34 H224.5" stroke="#111" stroke-width="0.8"/>
<text x="213.3" y="124.24" font-size="5.3" fill="#222" text-anchor="middle">80</text>
<path d="M222.6 118.16 H224.2" stroke="#111" stroke-width="0.8"/>
<path d="M222.6 113.99 H224.2" stroke="#111" stroke-width="0.8"/>
<path d="M222.6 109.81 H224.2" stroke="#111" stroke-width="0.8"/>
<path d="M220.6 105.63 H224.5" stroke="#111" stroke-width="0.8"/>
<text x="213.3" y="107.53" font-size="5.3" fill="#222" text-anchor="middle">100</text>
<path d="M222.6 101.45 H224.2" stroke="#111" stroke-width="0.8"/>
<path d="M222.6 97.27 H224.2" stroke="#111" stroke-width="0.8"/>
<path d="M222.6 93.09 H224.2" stroke="#111" stroke-width="0.8"/>
<path d="M220.6 88.91 H224.5" stroke="#111" stroke-width="0.8"/>
<text x="213.3" y="90.81" font-size="5.3" fill="#222" text-anchor="middle">120</text>
<path d="M222.6 84.74 H224.2" stroke="#111" stroke-width="0.8"/>
<path d="M222.6 80.56 H224.2" stroke="#111" stroke-width="0.8"/>
<path d="M222.6 76.38 H224.2" stroke="#111" stroke-width="0.8"/>
<path d="M220.6 72.20 H224.5" stroke="#111" stroke-width="0.8"/>
<text x="213.3" y="74.10" font-size="5.3" fill="#222" text-anchor="middle">140</text>
<path d="M230.30 187.29999999999998 V191.2" stroke="#111" stroke-width="0.8"/>
<text x="230.30" y="198.5" font-size="5.5" fill="#222" text-anchor="middle">23</text>
<path d="M266.58 187.29999999999998 V191.2" stroke="#111" stroke-width="0.8"/>
<text x="266.58" y="198.5" font-size="5.5" fill="#222" text-anchor="middle">24</text>
<path d="M302.86 187.29999999999998 V191.2" stroke="#111" stroke-width="0.8"/>
<text x="302.86" y="198.5" font-size="5.5" fill="#222" text-anchor="middle">25</text>
<path d="M339.14 187.29999999999998 V191.2" stroke="#111" stroke-width="0.8"/>
<text x="339.14" y="198.5" font-size="5.5" fill="#222" text-anchor="middle">26</text>
<path d="M375.42 187.29999999999998 V191.2" stroke="#111" stroke-width="0.8"/>
<text x="375.42" y="198.5" font-size="5.5" fill="#222" text-anchor="middle">27</text>
<path d="M411.70 187.29999999999998 V191.2" stroke="#111" stroke-width="0.8"/>
<text x="411.70" y="198.5" font-size="5.5" fill="#222" text-anchor="middle">28</text>
<path d="M230.30 188.0 V189.6" stroke="#111" stroke-width="0.7"/>
<path d="M237.56 188.0 V189.6" stroke="#111" stroke-width="0.7"/>
<path d="M244.81 188.0 V189.6" stroke="#111" stroke-width="0.7"/>
<path d="M252.07 188.0 V189.6" stroke="#111" stroke-width="0.7"/>
<path d="M259.32 188.0 V189.6" stroke="#111" stroke-width="0.7"/>
<path d="M266.58 188.0 V189.6" stroke="#111" stroke-width="0.7"/>
<path d="M273.84 188.0 V189.6" stroke="#111" stroke-width="0.7"/>
<path d="M281.09 188.0 V189.6" stroke="#111" stroke-width="0.7"/>
<path d="M288.35 188.0 V189.6" stroke="#111" stroke-width="0.7"/>
<path d="M295.60 188.0 V189.6" stroke="#111" stroke-width="0.7"/>
<path d="M302.86 188.0 V189.6" stroke="#111" stroke-width="0.7"/>
<path d="M310.12 188.0 V189.6" stroke="#111" stroke-width="0.7"/>
<path d="M317.37 188.0 V189.6" stroke="#111" stroke-width="0.7"/>
<path d="M324.63 188.0 V189.6" stroke="#111" stroke-width="0.7"/>
<path d="M331.88 188.0 V189.6" stroke="#111" stroke-width="0.7"/>
<path d="M339.14 188.0 V189.6" stroke="#111" stroke-width="0.7"/>
<path d="M346.40 188.0 V189.6" stroke="#111" stroke-width="0.7"/>
<path d="M353.65 188.0 V189.6" stroke="#111" stroke-width="0.7"/>
<path d="M360.91 188.0 V189.6" stroke="#111" stroke-width="0.7"/>
<path d="M368.16 188.0 V189.6" stroke="#111" stroke-width="0.7"/>
<path d="M375.42 188.0 V189.6" stroke="#111" stroke-width="0.7"/>
<path d="M382.68 188.0 V189.6" stroke="#111" stroke-width="0.7"/>
<path d="M389.93 188.0 V189.6" stroke="#111" stroke-width="0.7"/>
<path d="M397.19 188.0 V189.6" stroke="#111" stroke-width="0.7"/>
<path d="M404.44 188.0 V189.6" stroke="#111" stroke-width="0.7"/>
<path d="M411.70 188.0 V189.6" stroke="#111" stroke-width="0.7"/>
<path d="M418.96 188.0 V189.6" stroke="#111" stroke-width="0.7"/>
<text x="323.3" y="207.39999999999998" font-size="6" font-weight="bold" fill="#111" text-anchor="middle">Retention Time</text>
<text transform="translate(203.2 130.7) rotate(-90)" font-size="5.8" font-weight="bold" fill="#111" text-anchor="middle">Intensity (10^3)</text>
</svg>
<div class="abs tabstrip" style="left:434.3px;top:30.7px;width:237.4px;height:8.2px;"></div>
<div class="abs pane" style="left:434.3px;top:38.5px;width:237.4px;height:174.79999999999998px;"></div>
<svg class="abs" style="left:434.3px;top:30.7px" width="237.4" height="182.6" viewBox="434.3 30.7 237.4 182.6">
<path d="M434.3 38.6 L434.3 38.6 L442.7 31.7 Q443.3 31.099999999999998 444.3 31.099999999999998 L545.2 31.099999999999998 Q546.7 31.099999999999998 546.7 32.4 L546.7 38.6 L671.7 38.6 L671.7 39.3 L434.3 39.3Z" fill="#fff"/>
<path d="M434.3 38.6 L434.3 38.6 L442.7 31.7 Q443.3 31.099999999999998 444.3 31.099999999999998 L545.2 31.099999999999998 Q546.7 31.099999999999998 546.7 32.4 L546.7 38.6 L671.7 38.6" fill="none" stroke="#bdbaa9" stroke-width="0.5"/>
<path d="M649.1 34.9 l1.7 -1.8 v3.6z M656.5 34.9 l-1.7 -1.8 v3.6z" fill="none" stroke="#444" stroke-width="0.55"/>
<path d="M659.9000000000001 34.3 h3.4 l-1.7 2.1z" fill="#111"/>
<path d="M665.9000000000001 33.1 l3.3 3.5 M669.2 33.1 l-3.3 3.5" stroke="#111" stroke-width="0.9"/>
<rect x="459.3" y="47.2" width="172" height="22" fill="#fff" stroke="#444" stroke-width="0.6"/>
<path d="M460.90000000000003 49.5 H471.6" stroke="#1a1a8c" stroke-width="1" opacity="1"/>
<text x="476.1" y="51.35" font-size="4.7" fill="#222">y9 - 1070.6065+</text>
<path d="M518.0 49.5 H528.6999999999999" stroke="#7b2fd0" stroke-width="1" opacity="1"/>
<text x="533.1999999999999" y="51.35" font-size="4.7" fill="#222">y7 - 829.4639+</text>
<path d="M574.7 49.5 H585.4" stroke="#8b2a2a" stroke-width="1" opacity="1"/>
<text x="589.9" y="51.35" font-size="4.7" fill="#222">y4 - 501.3256+</text>
<path d="M460.90000000000003 55.5 H471.6" stroke="#d2803c" stroke-width="1" opacity="1"/>
<text x="476.1" y="56.800000000000004" font-size="4.7" fill="#222">y16 - 996.9940++</text>
<path d="M518.0 55.5 H528.6999999999999" stroke="#159390" stroke-width="1" opacity="1"/>
<text x="533.1999999999999" y="56.800000000000004" font-size="4.7" fill="#222">y15 - 940.4520++</text>
<path d="M574.7 55.5 H585.4" stroke="#1c8a2c" stroke-width="1" opacity="1"/>
<text x="589.9" y="56.800000000000004" font-size="4.7" fill="#222">y13 - 794.3990++</text>
<path d="M460.90000000000003 60.5 H471.6" stroke="#f0a81e" stroke-width="1" opacity="1"/>
<text x="476.1" y="62.25" font-size="4.7" fill="#222">y10 - 600.3202++</text>
<path d="M518.0 60.5 H528.6999999999999" stroke="#6a5fc4" stroke-width="1" opacity="1"/>
<text x="533.1999999999999" y="62.25" font-size="4.7" fill="#222">y9 - 535.8069++</text>
<path d="M574.7 60.5 H585.4" stroke="#8a1d8a" stroke-width="1" opacity="1"/>
<text x="589.9" y="62.25" font-size="4.7" fill="#222">b8 - 1010.4135+</text>
<path d="M460.90000000000003 66.5 H471.6" stroke="#3fae3f" stroke-width="1" opacity="1"/>
<text x="476.1" y="67.70000000000002" font-size="4.7" fill="#222">b7 - 441.1891++</text>
<path d="M532.4 91.5 V189.2" stroke="#3a3a3a" stroke-width="0.75" stroke-dasharray="1.1 0.8"/>
<path d="M570.6 91.5 V189.2" stroke="#3a3a3a" stroke-width="0.75" stroke-dasharray="1.1 0.8"/>
<path d="M491.5 74 V189.2" stroke="#555" stroke-width="0.55" stroke-dasharray="1 0.9"/>
<path d="M630.5 137 V189.2" stroke="#888" stroke-width="0.55" stroke-dasharray="1 0.9"/>
<path d="M647 137 V189.2" stroke="#888" stroke-width="0.55" stroke-dasharray="1 0.9"/>
<path d="M532.5 189.2 L537.2 168.0 L541.5 170.7 L554.1 91.9 L559.4 96.9 L563.5 140.0 L567.8 184.0 L570.5 189.2" stroke="#159390" stroke-width="1" fill="none" stroke-linejoin="round"/>
<path d="M537.0 189.2 L543.2 119.1 L548.7 140.0 L551.5 175.0 L553.0 189.2" stroke="#8a1d8a" stroke-width="1" fill="none" stroke-linejoin="round"/>
<path d="M545.0 189.2 L549.0 170.0 L553.8 149.5 L558.3 154.7 L562.0 172.0 L566.0 185.0 L570.0 189.2" stroke="#7b2fd0" stroke-width="1" fill="none" stroke-linejoin="round"/>
<path d="M539.0 189.2 L544.0 170.0 L548.7 146.7 L552.0 160.0 L556.0 178.0 L559.0 189.2" stroke="#d2803c" stroke-width="1" fill="none" stroke-linejoin="round"/>
<path d="M545.0 189.2 L550.0 178.0 L554.3 164.3 L557.5 168.0 L560.7 176.0 L564.0 189.2" stroke="#f0a81e" stroke-width="1" fill="none" stroke-linejoin="round"/>
<path d="M532.5 189.2 L537.5 176.6 L542.3 177.8 L548.4 189.2 L554.3 174.7 L558.0 178.0 L563.0 189.2" stroke="#1c8a2c" stroke-width="1" fill="none" stroke-linejoin="round"/>
<path d="M541.0 189.2 L545.0 184.0 L549.0 189.2" stroke="#8b2a2a" stroke-width="1" fill="none" stroke-linejoin="round"/>
<path d="M597.7 189.2 L603.6 180.6 L609.5 182.0 L614.4 189.2" stroke="#6a5fc4" stroke-width="1" fill="none" stroke-linejoin="round"/>
<path d="M620.0 189.2 L625.2 176.5 L630.5 179.0 L636.4 189.2" stroke="#8a1d8a" stroke-width="1" fill="none" stroke-linejoin="round"/>
<path d="M630.5 189.2 L636.0 136.9 L641.5 144.7 L647.0 189.2" stroke="#159390" stroke-width="1" fill="none" stroke-linejoin="round"/>
<path d="M459.4 72.2 V189.2 H664.5" stroke="#222" stroke-width="0.7" fill="none"/>
<path d="M459.9 189.2 H664.5" stroke="#3a2f9a" stroke-width="0.9" fill="none"/>
<path d="M457.4 189.20 H461.29999999999995" stroke="#111" stroke-width="0.8"/>
<text x="451.6" y="191.10" font-size="5.3" fill="#222" text-anchor="middle">0</text>
<path d="M459.4 185.30 H461.0" stroke="#111" stroke-width="0.8"/>
<path d="M459.4 181.40 H461.0" stroke="#111" stroke-width="0.8"/>
<path d="M459.4 177.50 H461.0" stroke="#111" stroke-width="0.8"/>
<path d="M459.4 173.60 H461.0" stroke="#111" stroke-width="0.8"/>
<path d="M457.4 169.70 H461.29999999999995" stroke="#111" stroke-width="0.8"/>
<text x="451.6" y="171.60" font-size="5.3" fill="#222" text-anchor="middle">5</text>
<path d="M459.4 165.80 H461.0" stroke="#111" stroke-width="0.8"/>
<path d="M459.4 161.90 H461.0" stroke="#111" stroke-width="0.8"/>
<path d="M459.4 158.00 H461.0" stroke="#111" stroke-width="0.8"/>
<path d="M459.4 154.10 H461.0" stroke="#111" stroke-width="0.8"/>
<path d="M457.4 150.20 H461.29999999999995" stroke="#111" stroke-width="0.8"/>
<text x="451.6" y="152.10" font-size="5.3" fill="#222" text-anchor="middle">10</text>
<path d="M459.4 146.30 H461.0" stroke="#111" stroke-width="0.8"/>
<path d="M459.4 142.40 H461.0" stroke="#111" stroke-width="0.8"/>
<path d="M459.4 138.50 H461.0" stroke="#111" stroke-width="0.8"/>
<path d="M459.4 134.60 H461.0" stroke="#111" stroke-width="0.8"/>
<path d="M457.4 130.70 H461.29999999999995" stroke="#111" stroke-width="0.8"/>
<text x="451.6" y="132.60" font-size="5.3" fill="#222" text-anchor="middle">15</text>
<path d="M459.4 126.80 H461.0" stroke="#111" stroke-width="0.8"/>
<path d="M459.4 122.90 H461.0" stroke="#111" stroke-width="0.8"/>
<path d="M459.4 119.00 H461.0" stroke="#111" stroke-width="0.8"/>
<path d="M459.4 115.10 H461.0" stroke="#111" stroke-width="0.8"/>
<path d="M457.4 111.20 H461.29999999999995" stroke="#111" stroke-width="0.8"/>
<text x="451.6" y="113.10" font-size="5.3" fill="#222" text-anchor="middle">20</text>
<path d="M459.4 107.30 H461.0" stroke="#111" stroke-width="0.8"/>
<path d="M459.4 103.40 H461.0" stroke="#111" stroke-width="0.8"/>
<path d="M459.4 99.50 H461.0" stroke="#111" stroke-width="0.8"/>
<path d="M459.4 95.60 H461.0" stroke="#111" stroke-width="0.8"/>
<path d="M457.4 91.70 H461.29999999999995" stroke="#111" stroke-width="0.8"/>
<text x="451.6" y="93.60" font-size="5.3" fill="#222" text-anchor="middle">25</text>
<path d="M459.4 87.80 H461.0" stroke="#111" stroke-width="0.8"/>
<path d="M459.4 83.90 H461.0" stroke="#111" stroke-width="0.8"/>
<path d="M459.4 80.00 H461.0" stroke="#111" stroke-width="0.8"/>
<path d="M459.4 76.10 H461.0" stroke="#111" stroke-width="0.8"/>
<path d="M457.4 72.20 H461.29999999999995" stroke="#111" stroke-width="0.8"/>
<text x="451.6" y="74.10" font-size="5.3" fill="#222" text-anchor="middle">30</text>
<path d="M467.80 187.29999999999998 V191.2" stroke="#111" stroke-width="0.8"/>
<text x="467.80" y="198.5" font-size="5.5" fill="#222" text-anchor="middle">23</text>
<path d="M504.50 187.29999999999998 V191.2" stroke="#111" stroke-width="0.8"/>
<text x="504.50" y="198.5" font-size="5.5" fill="#222" text-anchor="middle">24</text>
<path d="M541.20 187.29999999999998 V191.2" stroke="#111" stroke-width="0.8"/>
<text x="541.20" y="198.5" font-size="5.5" fill="#222" text-anchor="middle">25</text>
<path d="M577.90 187.29999999999998 V191.2" stroke="#111" stroke-width="0.8"/>
<text x="577.90" y="198.5" font-size="5.5" fill="#222" text-anchor="middle">26</text>
<path d="M614.60 187.29999999999998 V191.2" stroke="#111" stroke-width="0.8"/>
<text x="614.60" y="198.5" font-size="5.5" fill="#222" text-anchor="middle">27</text>
<path d="M651.30 187.29999999999998 V191.2" stroke="#111" stroke-width="0.8"/>
<text x="651.30" y="198.5" font-size="5.5" fill="#222" text-anchor="middle">28</text>
<path d="M460.46 188.0 V189.6" stroke="#111" stroke-width="0.7"/>
<path d="M467.80 188.0 V189.6" stroke="#111" stroke-width="0.7"/>
<path d="M475.14 188.0 V189.6" stroke="#111" stroke-width="0.7"/>
<path d="M482.48 188.0 V189.6" stroke="#111" stroke-width="0.7"/>
<path d="M489.82 188.0 V189.6" stroke="#111" stroke-width="0.7"/>
<path d="M497.16 188.0 V189.6" stroke="#111" stroke-width="0.7"/>
<path d="M504.50 188.0 V189.6" stroke="#111" stroke-width="0.7"/>
<path d="M511.84 188.0 V189.6" stroke="#111" stroke-width="0.7"/>
<path d="M519.18 188.0 V189.6" stroke="#111" stroke-width="0.7"/>
<path d="M526.52 188.0 V189.6" stroke="#111" stroke-width="0.7"/>
<path d="M533.86 188.0 V189.6" stroke="#111" stroke-width="0.7"/>
<path d="M541.20 188.0 V189.6" stroke="#111" stroke-width="0.7"/>
<path d="M548.54 188.0 V189.6" stroke="#111" stroke-width="0.7"/>
<path d="M555.88 188.0 V189.6" stroke="#111" stroke-width="0.7"/>
<path d="M563.22 188.0 V189.6" stroke="#111" stroke-width="0.7"/>
<path d="M570.56 188.0 V189.6" stroke="#111" stroke-width="0.7"/>
<path d="M577.90 188.0 V189.6" stroke="#111" stroke-width="0.7"/>
<path d="M585.24 188.0 V189.6" stroke="#111" stroke-width="0.7"/>
<path d="M592.58 188.0 V189.6" stroke="#111" stroke-width="0.7"/>
<path d="M599.92 188.0 V189.6" stroke="#111" stroke-width="0.7"/>
<path d="M607.26 188.0 V189.6" stroke="#111" stroke-width="0.7"/>
<path d="M614.60 188.0 V189.6" stroke="#111" stroke-width="0.7"/>
<path d="M621.94 188.0 V189.6" stroke="#111" stroke-width="0.7"/>
<path d="M629.28 188.0 V189.6" stroke="#111" stroke-width="0.7"/>
<path d="M636.62 188.0 V189.6" stroke="#111" stroke-width="0.7"/>
<path d="M643.96 188.0 V189.6" stroke="#111" stroke-width="0.7"/>
<path d="M651.30 188.0 V189.6" stroke="#111" stroke-width="0.7"/>
<path d="M658.64 188.0 V189.6" stroke="#111" stroke-width="0.7"/>
<text x="561.95" y="207.39999999999998" font-size="6" font-weight="bold" fill="#111" text-anchor="middle">Retention Time</text>
<text transform="translate(443.4 130.7) rotate(-90)" font-size="5.8" font-weight="bold" fill="#111" text-anchor="middle">Intensity (10^3)</text>
<text x="553.5" y="89" font-size="3.9" fill="#1e9a97" text-anchor="middle">25.0</text>
<path d="M546.9 89.2 l4.6 1.5 l-4.6 1.5z" fill="#111"/>
</svg>
<div class="abs tabstrip" style="left:194.2px;top:215.6px;width:238.3px;height:8.2px;"></div>
<div class="abs pane" style="left:194.2px;top:223.4px;width:238.3px;height:173.6px;"></div>
<svg class="abs" style="left:194.2px;top:215.6px" width="238.3" height="181.4" viewBox="194.2 215.6 238.3 181.4">
<path d="M194.2 223.5 L194.2 223.5 L202.6 216.6 Q203.2 216.0 204.2 216.0 L311.0 216.0 Q312.5 216.0 312.5 217.29999999999998 L312.5 223.5 L432.5 223.5 L432.5 224.2 L194.2 224.2Z" fill="#fff"/>
<path d="M194.2 223.5 L194.2 223.5 L202.6 216.6 Q203.2 216.0 204.2 216.0 L311.0 216.0 Q312.5 216.0 312.5 217.29999999999998 L312.5 223.5 L432.5 223.5" fill="none" stroke="#bdbaa9" stroke-width="0.5"/>
<path d="M409.9 219.79999999999998 l1.7 -1.8 v3.6z M417.3 219.79999999999998 l-1.7 -1.8 v3.6z" fill="none" stroke="#444" stroke-width="0.55"/>
<path d="M420.7 219.2 h3.4 l-1.7 2.1z" fill="#111"/>
<path d="M426.7 218.0 l3.3 3.5 M430.0 218.0 l-3.3 3.5" stroke="#111" stroke-width="0.9"/>
<rect x="219.3" y="231.3" width="172" height="22" fill="#fff" stroke="#444" stroke-width="0.6"/>
<path d="M220.9 233.5 H231.60000000000002" stroke="#1a1a8c" stroke-width="1.4" opacity="0.75"/>
<text x="236.10000000000002" y="235.45000000000002" font-size="4.7" fill="#222">y9 - 1070.6065+</text>
<path d="M278.0 233.5 H288.7" stroke="#7b2fd0" stroke-width="1.4" opacity="0.75"/>
<text x="293.2" y="235.45000000000002" font-size="4.7" fill="#222">y7 - 829.4639+</text>
<path d="M334.70000000000005 233.5 H345.40000000000003" stroke="#8b2a2a" stroke-width="1.4" opacity="0.75"/>
<text x="349.90000000000003" y="235.45000000000002" font-size="4.7" fill="#222">y4 - 501.3256+</text>
<path d="M220.9 239.5 H231.60000000000002" stroke="#d2803c" stroke-width="1.4" opacity="0.75"/>
<text x="236.10000000000002" y="240.9" font-size="4.7" fill="#222">y16 - 996.9940++</text>
<path d="M278.0 239.5 H288.7" stroke="#159390" stroke-width="1.4" opacity="0.75"/>
<text x="293.2" y="240.9" font-size="4.7" fill="#222">y15 - 940.4520++</text>
<path d="M334.70000000000005 239.5 H345.40000000000003" stroke="#1c8a2c" stroke-width="1.4" opacity="0.75"/>
<text x="349.90000000000003" y="240.9" font-size="4.7" fill="#222">y13 - 794.3990++</text>
<path d="M220.9 244.5 H231.60000000000002" stroke="#f0a81e" stroke-width="1.4" opacity="0.75"/>
<text x="236.10000000000002" y="246.35000000000002" font-size="4.7" fill="#222">y10 - 600.3202++</text>
<path d="M278.0 244.5 H288.7" stroke="#6a5fc4" stroke-width="1.4" opacity="0.75"/>
<text x="293.2" y="246.35000000000002" font-size="4.7" fill="#222">y9 - 535.8069++</text>
<path d="M334.70000000000005 244.5 H345.40000000000003" stroke="#8a1d8a" stroke-width="1.4" opacity="0.75"/>
<text x="349.90000000000003" y="246.35000000000002" font-size="4.7" fill="#222">b8 - 1010.4135+</text>
<path d="M220.9 250.5 H231.60000000000002" stroke="#3fae3f" stroke-width="1.4" opacity="0.75"/>
<text x="236.10000000000002" y="251.8" font-size="4.7" fill="#222">b7 - 441.1891++</text>
<path d="M291.7 284 V373" stroke="#3a3a3a" stroke-width="0.75" stroke-dasharray="1.1 0.8"/>
<path d="M352.5 284 V373" stroke="#3a3a3a" stroke-width="0.75" stroke-dasharray="1.1 0.8"/>
<path d="M292.0 373.0 L297.5 329.1 L303.4 334.7 L307.8 358.0 L313.5 322.0 L319.0 283.8 L324.5 330.0 L330.6 373.0" stroke="#d2803c" stroke-width="1" fill="none" stroke-linejoin="round"/>
<path d="M292.0 373.0 L296.0 359.7 L303.4 345.0 L308.2 321.6 L313.7 350.9 L320.4 295.2 L324.8 290.1 L329.1 327.4 L334.3 364.0 L338.0 373.0" stroke="#159390" stroke-width="1" fill="none" stroke-linejoin="round"/>
<path d="M302.6 373.0 L308.0 342.0 L313.6 311.4 L319.6 331.0 L324.7 337.6 L330.0 357.0 L335.7 373.0" stroke="#7b2fd0" stroke-width="1" fill="none" stroke-linejoin="round"/>
<path d="M297.5 373.0 L303.0 355.6 L308.0 364.0 L313.7 373.0" stroke="#8a1d8a" stroke-width="1" fill="none" stroke-linejoin="round"/>
<path d="M314.4 373.0 L319.6 357.5 L329.9 373.0" stroke="#1c8a2c" stroke-width="1" fill="none" stroke-linejoin="round"/>
<path d="M314.4 373.0 L319.6 361.9 L329.9 373.0" stroke="#f0a81e" stroke-width="1" fill="none" stroke-linejoin="round"/>
<path d="M337.2 373.0 L341.6 367.0 L346.0 369.0 L350.4 373.0" stroke="#1c8a2c" stroke-width="1" fill="none" stroke-linejoin="round"/>
<path d="M352.4 373.0 L357.6 362.2 L367.5 373.0" stroke="#d2803c" stroke-width="1" fill="none" stroke-linejoin="round"/>
<path d="M401.8 373.0 L407.0 343.9 L412.0 358.0 L418.0 373.0" stroke="#f0a81e" stroke-width="1" fill="none" stroke-linejoin="round"/>
<path d="M219.4 256.2 V373 H424.5" stroke="#222" stroke-width="0.7" fill="none"/>
<path d="M219.9 373 H424.5" stroke="#3a2f9a" stroke-width="0.9" fill="none"/>
<path d="M217.4 373.00 H221.3" stroke="#111" stroke-width="0.8"/>
<text x="211.5" y="374.90" font-size="5.3" fill="#222" text-anchor="middle">0</text>
<path d="M219.4 369.11 H221.0" stroke="#111" stroke-width="0.8"/>
<path d="M219.4 365.21 H221.0" stroke="#111" stroke-width="0.8"/>
<path d="M219.4 361.32 H221.0" stroke="#111" stroke-width="0.8"/>
<path d="M219.4 357.43 H221.0" stroke="#111" stroke-width="0.8"/>
<path d="M217.4 353.53 H221.3" stroke="#111" stroke-width="0.8"/>
<text x="211.5" y="355.43" font-size="5.3" fill="#222" text-anchor="middle">5</text>
<path d="M219.4 349.64 H221.0" stroke="#111" stroke-width="0.8"/>
<path d="M219.4 345.75 H221.0" stroke="#111" stroke-width="0.8"/>
<path d="M219.4 341.85 H221.0" stroke="#111" stroke-width="0.8"/>
<path d="M219.4 337.96 H221.0" stroke="#111" stroke-width="0.8"/>
<path d="M217.4 334.07 H221.3" stroke="#111" stroke-width="0.8"/>
<text x="211.5" y="335.97" font-size="5.3" fill="#222" text-anchor="middle">10</text>
<path d="M219.4 330.17 H221.0" stroke="#111" stroke-width="0.8"/>
<path d="M219.4 326.28 H221.0" stroke="#111" stroke-width="0.8"/>
<path d="M219.4 322.39 H221.0" stroke="#111" stroke-width="0.8"/>
<path d="M219.4 318.49 H221.0" stroke="#111" stroke-width="0.8"/>
<path d="M217.4 314.60 H221.3" stroke="#111" stroke-width="0.8"/>
<text x="211.5" y="316.50" font-size="5.3" fill="#222" text-anchor="middle">15</text>
<path d="M219.4 310.71 H221.0" stroke="#111" stroke-width="0.8"/>
<path d="M219.4 306.81 H221.0" stroke="#111" stroke-width="0.8"/>
<path d="M219.4 302.92 H221.0" stroke="#111" stroke-width="0.8"/>
<path d="M219.4 299.03 H221.0" stroke="#111" stroke-width="0.8"/>
<path d="M217.4 295.13 H221.3" stroke="#111" stroke-width="0.8"/>
<text x="211.5" y="297.03" font-size="5.3" fill="#222" text-anchor="middle">20</text>
<path d="M219.4 291.24 H221.0" stroke="#111" stroke-width="0.8"/>
<path d="M219.4 287.35 H221.0" stroke="#111" stroke-width="0.8"/>
<path d="M219.4 283.45 H221.0" stroke="#111" stroke-width="0.8"/>
<path d="M219.4 279.56 H221.0" stroke="#111" stroke-width="0.8"/>
<path d="M217.4 275.67 H221.3" stroke="#111" stroke-width="0.8"/>
<text x="211.5" y="277.57" font-size="5.3" fill="#222" text-anchor="middle">25</text>
<path d="M219.4 271.77 H221.0" stroke="#111" stroke-width="0.8"/>
<path d="M219.4 267.88 H221.0" stroke="#111" stroke-width="0.8"/>
<path d="M219.4 263.99 H221.0" stroke="#111" stroke-width="0.8"/>
<path d="M219.4 260.09 H221.0" stroke="#111" stroke-width="0.8"/>
<path d="M217.4 256.20 H221.3" stroke="#111" stroke-width="0.8"/>
<text x="211.5" y="258.10" font-size="5.3" fill="#222" text-anchor="middle">30</text>
<path d="M227.10 371.1 V375" stroke="#111" stroke-width="0.8"/>
<text x="227.10" y="382.3" font-size="5.5" fill="#222" text-anchor="middle">23</text>
<path d="M263.90 371.1 V375" stroke="#111" stroke-width="0.8"/>
<text x="263.90" y="382.3" font-size="5.5" fill="#222" text-anchor="middle">24</text>
<path d="M300.70 371.1 V375" stroke="#111" stroke-width="0.8"/>
<text x="300.70" y="382.3" font-size="5.5" fill="#222" text-anchor="middle">25</text>
<path d="M337.50 371.1 V375" stroke="#111" stroke-width="0.8"/>
<text x="337.50" y="382.3" font-size="5.5" fill="#222" text-anchor="middle">26</text>
<path d="M374.30 371.1 V375" stroke="#111" stroke-width="0.8"/>
<text x="374.30" y="382.3" font-size="5.5" fill="#222" text-anchor="middle">27</text>
<path d="M411.10 371.1 V375" stroke="#111" stroke-width="0.8"/>
<text x="411.10" y="382.3" font-size="5.5" fill="#222" text-anchor="middle">28</text>
<path d="M227.10 371.8 V373.4" stroke="#111" stroke-width="0.7"/>
<path d="M234.46 371.8 V373.4" stroke="#111" stroke-width="0.7"/>
<path d="M241.82 371.8 V373.4" stroke="#111" stroke-width="0.7"/>
<path d="M249.18 371.8 V373.4" stroke="#111" stroke-width="0.7"/>
<path d="M256.54 371.8 V373.4" stroke="#111" stroke-width="0.7"/>
<path d="M263.90 371.8 V373.4" stroke="#111" stroke-width="0.7"/>
<path d="M271.26 371.8 V373.4" stroke="#111" stroke-width="0.7"/>
<path d="M278.62 371.8 V373.4" stroke="#111" stroke-width="0.7"/>
<path d="M285.98 371.8 V373.4" stroke="#111" stroke-width="0.7"/>
<path d="M293.34 371.8 V373.4" stroke="#111" stroke-width="0.7"/>
<path d="M300.70 371.8 V373.4" stroke="#111" stroke-width="0.7"/>
<path d="M308.06 371.8 V373.4" stroke="#111" stroke-width="0.7"/>
<path d="M315.42 371.8 V373.4" stroke="#111" stroke-width="0.7"/>
<path d="M322.78 371.8 V373.4" stroke="#111" stroke-width="0.7"/>
<path d="M330.14 371.8 V373.4" stroke="#111" stroke-width="0.7"/>
<path d="M337.50 371.8 V373.4" stroke="#111" stroke-width="0.7"/>
<path d="M344.86 371.8 V373.4" stroke="#111" stroke-width="0.7"/>
<path d="M352.22 371.8 V373.4" stroke="#111" stroke-width="0.7"/>
<path d="M359.58 371.8 V373.4" stroke="#111" stroke-width="0.7"/>
<path d="M366.94 371.8 V373.4" stroke="#111" stroke-width="0.7"/>
<path d="M374.30 371.8 V373.4" stroke="#111" stroke-width="0.7"/>
<path d="M381.66 371.8 V373.4" stroke="#111" stroke-width="0.7"/>
<path d="M389.02 371.8 V373.4" stroke="#111" stroke-width="0.7"/>
<path d="M396.38 371.8 V373.4" stroke="#111" stroke-width="0.7"/>
<path d="M403.74 371.8 V373.4" stroke="#111" stroke-width="0.7"/>
<path d="M411.10 371.8 V373.4" stroke="#111" stroke-width="0.7"/>
<path d="M418.46 371.8 V373.4" stroke="#111" stroke-width="0.7"/>
<text x="321.95" y="391.2" font-size="6" font-weight="bold" fill="#111" text-anchor="middle">Retention Time</text>
<text transform="translate(203.2 314.6) rotate(-90)" font-size="5.8" font-weight="bold" fill="#111" text-anchor="middle">Intensity (10^3)</text>
<text x="319.5" y="281.3" font-size="3.9" fill="#d2803c" text-anchor="middle">25.6</text>
<path d="M312.9 281.5 l4.6 1.5 l-4.6 1.5z" fill="#111"/>
</svg>
<div class="abs tabstrip" style="left:434.3px;top:215.6px;width:237.4px;height:8.2px;"></div>
<div class="abs pane" style="left:434.3px;top:223.4px;width:237.4px;height:173.6px;"></div>
<svg class="abs" style="left:434.3px;top:215.6px" width="237.4" height="181.4" viewBox="434.3 215.6 237.4 181.4">
<path d="M434.3 223.5 L434.3 223.5 L442.7 216.6 Q443.3 216.0 444.3 216.0 L552.0 216.0 Q553.5 216.0 553.5 217.29999999999998 L553.5 223.5 L671.7 223.5 L671.7 224.2 L434.3 224.2Z" fill="#fff"/>
<path d="M434.3 223.5 L434.3 223.5 L442.7 216.6 Q443.3 216.0 444.3 216.0 L552.0 216.0 Q553.5 216.0 553.5 217.29999999999998 L553.5 223.5 L671.7 223.5" fill="none" stroke="#bdbaa9" stroke-width="0.5"/>
<path d="M649.1 219.79999999999998 l1.7 -1.8 v3.6z M656.5 219.79999999999998 l-1.7 -1.8 v3.6z" fill="none" stroke="#444" stroke-width="0.55"/>
<path d="M659.9000000000001 219.2 h3.4 l-1.7 2.1z" fill="#111"/>
<path d="M665.9000000000001 218.0 l3.3 3.5 M669.2 218.0 l-3.3 3.5" stroke="#111" stroke-width="0.9"/>
<rect x="459.3" y="231.3" width="172" height="22" fill="#fff" stroke="#444" stroke-width="0.6"/>
<path d="M460.90000000000003 233.5 H471.6" stroke="#1a1a8c" stroke-width="1.4" opacity="0.75"/>
<text x="476.1" y="235.45000000000002" font-size="4.7" fill="#222">y9 - 1070.6065+</text>
<path d="M518.0 233.5 H528.6999999999999" stroke="#7b2fd0" stroke-width="1.4" opacity="0.75"/>
<text x="533.1999999999999" y="235.45000000000002" font-size="4.7" fill="#222">y7 - 829.4639+</text>
<path d="M574.7 233.5 H585.4" stroke="#8b2a2a" stroke-width="1.4" opacity="0.75"/>
<text x="589.9" y="235.45000000000002" font-size="4.7" fill="#222">y4 - 501.3256+</text>
<path d="M460.90000000000003 239.5 H471.6" stroke="#d2803c" stroke-width="1.4" opacity="0.75"/>
<text x="476.1" y="240.9" font-size="4.7" fill="#222">y16 - 996.9940++</text>
<path d="M518.0 239.5 H528.6999999999999" stroke="#159390" stroke-width="1.4" opacity="0.75"/>
<text x="533.1999999999999" y="240.9" font-size="4.7" fill="#222">y15 - 940.4520++</text>
<path d="M574.7 239.5 H585.4" stroke="#1c8a2c" stroke-width="1.4" opacity="0.75"/>
<text x="589.9" y="240.9" font-size="4.7" fill="#222">y13 - 794.3990++</text>
<path d="M460.90000000000003 244.5 H471.6" stroke="#f0a81e" stroke-width="1.4" opacity="0.75"/>
<text x="476.1" y="246.35000000000002" font-size="4.7" fill="#222">y10 - 600.3202++</text>
<path d="M518.0 244.5 H528.6999999999999" stroke="#6a5fc4" stroke-width="1.4" opacity="0.75"/>
<text x="533.1999999999999" y="246.35000000000002" font-size="4.7" fill="#222">y9 - 535.8069++</text>
<path d="M574.7 244.5 H585.4" stroke="#8a1d8a" stroke-width="1.4" opacity="0.75"/>
<text x="589.9" y="246.35000000000002" font-size="4.7" fill="#222">b8 - 1010.4135+</text>
<path d="M460.90000000000003 250.5 H471.6" stroke="#3fae3f" stroke-width="1.4" opacity="0.75"/>
<text x="476.1" y="251.8" font-size="4.7" fill="#222">b7 - 441.1891++</text>
<path d="M537.4 273 V373" stroke="#3a3a3a" stroke-width="0.75" stroke-dasharray="1.1 0.8"/>
<path d="M570.5 273 V373" stroke="#3a3a3a" stroke-width="0.75" stroke-dasharray="1.1 0.8"/>
<path d="M494.0 373.0 L498.8 363.1 L510.1 373.0" stroke="#d2803c" stroke-width="1" fill="none" stroke-linejoin="round"/>
<path d="M499.9 373.0 L504.0 368.7 L513.1 373.0" stroke="#1c8a2c" stroke-width="1" fill="none" stroke-linejoin="round"/>
<path d="M521.2 373.0 L526.6 363.8 L536.6 373.0" stroke="#159390" stroke-width="1" fill="none" stroke-linejoin="round"/>
<path d="M537.5 373.0 L542.7 304.0 L548.5 292.6 L553.7 272.7 L555.6 295.4 L557.5 322.0 L560.0 350.0 L563.2 373.0" stroke="#1c8a2c" stroke-width="1" fill="none" stroke-linejoin="round"/>
<path d="M537.5 373.0 L542.0 340.0 L546.3 304.7 L554.2 290.4 L559.1 302.5 L562.3 349.0 L566.0 362.0 L570.0 373.0" stroke="#159390" stroke-width="1" fill="none" stroke-linejoin="round"/>
<path d="M537.5 373.0 L543.0 313.7 L548.0 306.3 L553.4 337.3 L559.3 366.7 L563.2 373.0" stroke="#7b2fd0" stroke-width="1" fill="none" stroke-linejoin="round"/>
<path d="M547.0 373.0 L553.8 336.3 L560.3 362.7 L563.5 373.0" stroke="#8a1d8a" stroke-width="1" fill="none" stroke-linejoin="round"/>
<path d="M548.0 373.0 L553.8 347.0 L558.0 360.0 L563.0 373.0" stroke="#8b2a2a" stroke-width="1" fill="none" stroke-linejoin="round"/>
<path d="M537.5 373.0 L543.0 349.4 L548.5 362.4 L553.8 348.0 L558.0 360.0 L563.0 373.0" stroke="#d2803c" stroke-width="1" fill="none" stroke-linejoin="round"/>
<path d="M537.5 373.0 L543.0 363.1 L552.5 373.0" stroke="#f0a81e" stroke-width="1" fill="none" stroke-linejoin="round"/>
<path d="M592.3 373.0 L597.3 358.3 L608.2 373.0" stroke="#1c8a2c" stroke-width="1" fill="none" stroke-linejoin="round"/>
<path d="M603.2 373.0 L608.5 364.2 L619.0 373.0" stroke="#6a5fc4" stroke-width="1" fill="none" stroke-linejoin="round"/>
<path d="M459.4 255.8 V373 H664.8" stroke="#222" stroke-width="0.7" fill="none"/>
<path d="M459.9 373 H664.8" stroke="#3a2f9a" stroke-width="0.9" fill="none"/>
<path d="M457.4 373.00 H461.29999999999995" stroke="#111" stroke-width="0.8"/>
<text x="451.6" y="374.90" font-size="5.3" fill="#222" text-anchor="middle">0</text>
<path d="M459.4 369.65 H461.0" stroke="#111" stroke-width="0.8"/>
<path d="M459.4 366.30 H461.0" stroke="#111" stroke-width="0.8"/>
<path d="M459.4 362.95 H461.0" stroke="#111" stroke-width="0.8"/>
<path d="M459.4 359.61 H461.0" stroke="#111" stroke-width="0.8"/>
<path d="M457.4 356.26 H461.29999999999995" stroke="#111" stroke-width="0.8"/>
<text x="451.6" y="358.16" font-size="5.3" fill="#222" text-anchor="middle">5</text>
<path d="M459.4 352.91 H461.0" stroke="#111" stroke-width="0.8"/>
<path d="M459.4 349.56 H461.0" stroke="#111" stroke-width="0.8"/>
<path d="M459.4 346.21 H461.0" stroke="#111" stroke-width="0.8"/>
<path d="M459.4 342.86 H461.0" stroke="#111" stroke-width="0.8"/>
<path d="M457.4 339.51 H461.29999999999995" stroke="#111" stroke-width="0.8"/>
<text x="451.6" y="341.41" font-size="5.3" fill="#222" text-anchor="middle">10</text>
<path d="M459.4 336.17 H461.0" stroke="#111" stroke-width="0.8"/>
<path d="M459.4 332.82 H461.0" stroke="#111" stroke-width="0.8"/>
<path d="M459.4 329.47 H461.0" stroke="#111" stroke-width="0.8"/>
<path d="M459.4 326.12 H461.0" stroke="#111" stroke-width="0.8"/>
<path d="M457.4 322.77 H461.29999999999995" stroke="#111" stroke-width="0.8"/>
<text x="451.6" y="324.67" font-size="5.3" fill="#222" text-anchor="middle">15</text>
<path d="M459.4 319.42 H461.0" stroke="#111" stroke-width="0.8"/>
<path d="M459.4 316.07 H461.0" stroke="#111" stroke-width="0.8"/>
<path d="M459.4 312.73 H461.0" stroke="#111" stroke-width="0.8"/>
<path d="M459.4 309.38 H461.0" stroke="#111" stroke-width="0.8"/>
<path d="M457.4 306.03 H461.29999999999995" stroke="#111" stroke-width="0.8"/>
<text x="451.6" y="307.93" font-size="5.3" fill="#222" text-anchor="middle">20</text>
<path d="M459.4 302.68 H461.0" stroke="#111" stroke-width="0.8"/>
<path d="M459.4 299.33 H461.0" stroke="#111" stroke-width="0.8"/>
<path d="M459.4 295.98 H461.0" stroke="#111" stroke-width="0.8"/>
<path d="M459.4 292.63 H461.0" stroke="#111" stroke-width="0.8"/>
<path d="M457.4 289.29 H461.29999999999995" stroke="#111" stroke-width="0.8"/>
<text x="451.6" y="291.19" font-size="5.3" fill="#222" text-anchor="middle">25</text>
<path d="M459.4 285.94 H461.0" stroke="#111" stroke-width="0.8"/>
<path d="M459.4 282.59 H461.0" stroke="#111" stroke-width="0.8"/>
<path d="M459.4 279.24 H461.0" stroke="#111" stroke-width="0.8"/>
<path d="M459.4 275.89 H461.0" stroke="#111" stroke-width="0.8"/>
<path d="M457.4 272.54 H461.29999999999995" stroke="#111" stroke-width="0.8"/>
<text x="451.6" y="274.44" font-size="5.3" fill="#222" text-anchor="middle">30</text>
<path d="M459.4 269.19 H461.0" stroke="#111" stroke-width="0.8"/>
<path d="M459.4 265.85 H461.0" stroke="#111" stroke-width="0.8"/>
<path d="M459.4 262.50 H461.0" stroke="#111" stroke-width="0.8"/>
<path d="M459.4 259.15 H461.0" stroke="#111" stroke-width="0.8"/>
<path d="M457.4 255.80 H461.29999999999995" stroke="#111" stroke-width="0.8"/>
<text x="451.6" y="257.70" font-size="5.3" fill="#222" text-anchor="middle">35</text>
<path d="M467.40 371.1 V375" stroke="#111" stroke-width="0.8"/>
<text x="467.40" y="382.3" font-size="5.5" fill="#222" text-anchor="middle">23</text>
<path d="M504.08 371.1 V375" stroke="#111" stroke-width="0.8"/>
<text x="504.08" y="382.3" font-size="5.5" fill="#222" text-anchor="middle">24</text>
<path d="M540.76 371.1 V375" stroke="#111" stroke-width="0.8"/>
<text x="540.76" y="382.3" font-size="5.5" fill="#222" text-anchor="middle">25</text>
<path d="M577.44 371.1 V375" stroke="#111" stroke-width="0.8"/>
<text x="577.44" y="382.3" font-size="5.5" fill="#222" text-anchor="middle">26</text>
<path d="M614.12 371.1 V375" stroke="#111" stroke-width="0.8"/>
<text x="614.12" y="382.3" font-size="5.5" fill="#222" text-anchor="middle">27</text>
<path d="M650.80 371.1 V375" stroke="#111" stroke-width="0.8"/>
<text x="650.80" y="382.3" font-size="5.5" fill="#222" text-anchor="middle">28</text>
<path d="M467.40 371.8 V373.4" stroke="#111" stroke-width="0.7"/>
<path d="M474.74 371.8 V373.4" stroke="#111" stroke-width="0.7"/>
<path d="M482.07 371.8 V373.4" stroke="#111" stroke-width="0.7"/>
<path d="M489.41 371.8 V373.4" stroke="#111" stroke-width="0.7"/>
<path d="M496.74 371.8 V373.4" stroke="#111" stroke-width="0.7"/>
<path d="M504.08 371.8 V373.4" stroke="#111" stroke-width="0.7"/>
<path d="M511.42 371.8 V373.4" stroke="#111" stroke-width="0.7"/>
<path d="M518.75 371.8 V373.4" stroke="#111" stroke-width="0.7"/>
<path d="M526.09 371.8 V373.4" stroke="#111" stroke-width="0.7"/>
<path d="M533.42 371.8 V373.4" stroke="#111" stroke-width="0.7"/>
<path d="M540.76 371.8 V373.4" stroke="#111" stroke-width="0.7"/>
<path d="M548.10 371.8 V373.4" stroke="#111" stroke-width="0.7"/>
<path d="M555.43 371.8 V373.4" stroke="#111" stroke-width="0.7"/>
<path d="M562.77 371.8 V373.4" stroke="#111" stroke-width="0.7"/>
<path d="M570.10 371.8 V373.4" stroke="#111" stroke-width="0.7"/>
<path d="M577.44 371.8 V373.4" stroke="#111" stroke-width="0.7"/>
<path d="M584.78 371.8 V373.4" stroke="#111" stroke-width="0.7"/>
<path d="M592.11 371.8 V373.4" stroke="#111" stroke-width="0.7"/>
<path d="M599.45 371.8 V373.4" stroke="#111" stroke-width="0.7"/>
<path d="M606.78 371.8 V373.4" stroke="#111" stroke-width="0.7"/>
<path d="M614.12 371.8 V373.4" stroke="#111" stroke-width="0.7"/>
<path d="M621.46 371.8 V373.4" stroke="#111" stroke-width="0.7"/>
<path d="M628.79 371.8 V373.4" stroke="#111" stroke-width="0.7"/>
<path d="M636.13 371.8 V373.4" stroke="#111" stroke-width="0.7"/>
<path d="M643.46 371.8 V373.4" stroke="#111" stroke-width="0.7"/>
<path d="M650.80 371.8 V373.4" stroke="#111" stroke-width="0.7"/>
<path d="M658.14 371.8 V373.4" stroke="#111" stroke-width="0.7"/>
<text x="562.0999999999999" y="391.2" font-size="6" font-weight="bold" fill="#111" text-anchor="middle">Retention Time</text>
<text transform="translate(443.4 314.4) rotate(-90)" font-size="5.8" font-weight="bold" fill="#111" text-anchor="middle">Intensity (10^3)</text>
<text x="554.5" y="270.3" font-size="3.9" fill="#1c8a2c" text-anchor="middle">25.9</text>
<path d="M547.9 270.5 l4.6 1.5 l-4.6 1.5z" fill="#111"/>
</svg>
<div class="abs" style="left:432.4px;top:30.5px;width:2.3px;height:366.5px;background:linear-gradient(90deg,#b4cbf0,#86a8e2,#b4cbf0);"></div>
<div class="abs" style="left:194.2px;top:213.5px;width:477.5px;height:2.1px;background:linear-gradient(#b4cbf0,#7fa3e0 55%,#a8c2ec);"></div>
<div class="abs" style="left:670.8px;top:30.5px;width:0.8px;height:366.5px;background:#a9c4ee;"></div>
<svg class="abs" style="left:0;top:0" width="674" height="408" viewBox="0 0 674 408" font-family='"Liberation Sans", sans-serif'>
<text x="8.9" y="7.48" font-size="6.1" fill="#fff" font-weight="bold" textLength="88.3" lengthAdjust="spacingAndGlyphs">Skyline - DAV1420_analysis-2-b.sky</text>
<text x="5.7" y="17.00" font-size="5.3" fill="#1c1c1c" textLength="6.6" lengthAdjust="spacingAndGlyphs"><tspan text-decoration="underline">F</tspan>ile</text>
<text x="20" y="17.00" font-size="5.3" fill="#1c1c1c" textLength="6.8" lengthAdjust="spacingAndGlyphs"><tspan text-decoration="underline">E</tspan>dit</text>
<text x="34.7" y="17.00" font-size="5.3" fill="#1c1c1c" textLength="8.9" lengthAdjust="spacingAndGlyphs"><tspan text-decoration="underline">V</tspan>iew</text>
<text x="51.1" y="17.00" font-size="5.3" fill="#1c1c1c" textLength="15.1" lengthAdjust="spacingAndGlyphs"><tspan text-decoration="underline">S</tspan>ettings</text>
<text x="74.2" y="17.00" font-size="5.3" fill="#1c1c1c" textLength="9.5" lengthAdjust="spacingAndGlyphs"><tspan text-decoration="underline">T</tspan>ools</text>
<text x="91.7" y="17.00" font-size="5.3" fill="#1c1c1c" textLength="8.0" lengthAdjust="spacingAndGlyphs"><tspan text-decoration="underline">H</tspan>elp</text>
<text x="2" y="35.49" font-size="5" fill="#b0ccfa" font-weight="bold" textLength="14.6" lengthAdjust="spacingAndGlyphs">Targets</text>
<text x="0.9" y="43.87" font-size="5.5" fill="#1b2a4a" font-weight="bold" textLength="21" lengthAdjust="spacingAndGlyphs"><tspan text-decoration="underline">R</tspan>eplicates:</text>
<text x="25.8" y="43.61" font-size="4.5" fill="#111" textLength="92" lengthAdjust="spacingAndGlyphs">DAV1420_wt_110kD_direct_load_20140304_OT</text>
<text x="17.8" y="53.30" font-size="5.59" fill="#222">Library Peptides</text>
<text x="31.4" y="61.29" font-size="5.59" fill="#222">AEPHNLGITAAFLAGLLSGGHRDLLAA<tspan text-decoration="underline">C</tspan>GVSER (missed 1)</text>
<text x="31.4" y="69.27" font-size="5.59" fill="#222">ANGLAAFLLGHVR</text>
<text x="31.4" y="77.26" font-size="5.59" fill="#222">DAGTILVVGEAGSGK</text>
<text x="31.4" y="85.24" font-size="5.59" fill="#222">EGGFLSGYE<tspan text-decoration="underline">C</tspan>EEIRLPIFTSSGR (missed 1)</text>
<text x="31.4" y="93.23" font-size="5.59" fill="#222">ELLLGNR</text>
<text x="31.4" y="101.21" font-size="5.59" fill="#222">ELPAPLPLPYEAAE<tspan text-decoration="underline">C</tspan>GK</text>
<text x="31.4" y="109.20" font-size="5.59" fill="#222">FLGFWGNSVGDK</text>
<text x="31.4" y="117.18" font-size="5.59" fill="#222">GFSEEGIGLYLR</text>
<text x="31.4" y="125.17" font-size="5.59" fill="#222">GFSEEGIGLYLRK (missed 1)</text>
<text x="31.4" y="133.15" font-size="5.59" fill="#222">GNTFSLEEIGTLSSR</text>
<text x="31.4" y="141.14" font-size="5.59" fill="#222">H<tspan text-decoration="underline">C</tspan>SPIDPTSVDTLLFNLLGGNLLK</text>
<text x="31.4" y="149.12" font-size="5.59" fill="#222">LALFNNK</text>
<text x="31.4" y="157.11" font-size="5.59" fill="#222">LLDLAAVK</text>
<text x="31.4" y="165.09" font-size="5.59" fill="#222">LLPNL<tspan text-decoration="underline">C</tspan>IGGSR</text>
<text x="31.4" y="173.08" font-size="5.59" fill="#222">LSNNGITYR</text>
<text x="31.4" y="181.06" font-size="5.59" fill="#222">GLG<tspan text-decoration="underline">C</tspan>VAKPLSLR (missed 1)</text>
<text x="31.4" y="189.05" font-size="5.59" fill="#222">SLEEL<tspan text-decoration="underline">C</tspan>LEENHI<tspan text-decoration="underline">C</tspan>DEGVYSLAEGLKR (missed 1)</text>
<text x="31.4" y="197.03" font-size="5.59" fill="#222">SPAILGLEDLFDTHGHLNR</text>
<text x="31.4" y="205.02" font-size="5.59" fill="#222">SS<tspan text-decoration="underline">CC</tspan>DM<tspan text-decoration="underline">C</tspan>SGEEFDAGR</text>
<text x="31.4" y="213.00" font-size="5.59" fill="#222">VGNNHITAAGAEVLAGGLK</text>
<text x="31.4" y="220.99" font-size="5.59" fill="#222">VLTSRPDAVSALLR (missed 1)</text>
<text x="31.4" y="228.97" font-size="5.59" fill="#222">VLTSRPDAVSALLRK (missed 2)</text>
<text x="31.4" y="236.96" font-size="5.59" fill="#222">SLYEMGEEGLAGEAVR</text>
<text x="31.4" y="244.94" font-size="5.59" fill="#222">SLYEMGEEGLAGEAVRR (missed 1)</text>
<text x="39.6" y="252.93" font-size="5.59" fill="#cfe0ff" textLength="58.8" lengthAdjust="spacingAndGlyphs">1040.5100++ (dotp 0.5)</text>
<text x="46.8" y="260.91" font-size="5.59" fill="#222" textLength="79.3" lengthAdjust="spacingAndGlyphs">G [y9] - 1070.6065+ (rank 4)[7]</text>
<text x="46.8" y="268.90" font-size="5.59" fill="#222" textLength="74.9" lengthAdjust="spacingAndGlyphs">A [y7] - 829.4639+ (rank 7)[2]</text>
<text x="46.8" y="276.88" font-size="5.59" fill="#222" textLength="74.9" lengthAdjust="spacingAndGlyphs">A [y4] - 501.3256+ (rank 6)[5]</text>
<text x="46.8" y="284.87" font-size="5.59" fill="#222" textLength="81.39999999999999" lengthAdjust="spacingAndGlyphs">L [y16] - 996.9940++ (rank 2)[4]</text>
<text x="46.8" y="292.85" font-size="5.59" fill="#222" textLength="81.39999999999999" lengthAdjust="spacingAndGlyphs">Y [y15] - 940.4520++ (rank 5)[1]</text>
<text x="46.8" y="300.84" font-size="5.59" fill="#222" textLength="82.2" lengthAdjust="spacingAndGlyphs">M [y13] - 794.3990++ (rank 1)[3]</text>
<text x="46.8" y="308.82" font-size="5.59" fill="#222" textLength="74.9" lengthAdjust="spacingAndGlyphs">E [y10] - 600.3202++ (rank 3)</text>
<text x="46.8" y="316.81" font-size="5.59" fill="#222" textLength="79.3" lengthAdjust="spacingAndGlyphs">G [y9] - 535.8069++ (rank 9)[0]</text>
<text x="46.8" y="324.79" font-size="5.59" fill="#222" textLength="77.8" lengthAdjust="spacingAndGlyphs">E [b8] - 1010.4135+ (rank 8)[6]</text>
<text x="46.8" y="332.78" font-size="5.59" fill="#222" textLength="81.39999999999999" lengthAdjust="spacingAndGlyphs">E [b7] - 441.1891++ (rank 10)[9]</text>
<text x="1.5" y="404.15" font-size="4.9" fill="#222" textLength="12" lengthAdjust="spacingAndGlyphs">Ready</text>
<text x="544.5" y="404.19" font-size="5" fill="#1a1a1a" textLength="16" lengthAdjust="spacingAndGlyphs">1/1 prot</text>
<text x="574.4" y="404.19" font-size="5" fill="#1a1a1a" textLength="18.5" lengthAdjust="spacingAndGlyphs">24/24 pep</text>
<text x="606.5" y="404.19" font-size="5" fill="#1a1a1a" textLength="20.5" lengthAdjust="spacingAndGlyphs">29/29 prec</text>
<text x="639.8" y="404.19" font-size="5" fill="#1a1a1a" textLength="25" lengthAdjust="spacingAndGlyphs">770/779 tran</text>
<text x="202.8" y="37.45" font-size="4.9" fill="#111" font-weight="bold" textLength="108.19999999999999" lengthAdjust="spacingAndGlyphs">DAV1420_wt_110kD_direct_load_20140304_OT</text>
<text x="449.6" y="36.98" font-size="4.7" fill="#111" textLength="87.89999999999998" lengthAdjust="spacingAndGlyphs">DAV1420_wt_left_direct_load_20140304_OT</text>
<text x="210.6" y="221.88" font-size="4.7" fill="#111" textLength="91.20000000000002" lengthAdjust="spacingAndGlyphs">DAV1420_MM_right_direct_load_20140304_OT</text>
<text x="450.6" y="221.88" font-size="4.7" fill="#111" textLength="91.60000000000002" lengthAdjust="spacingAndGlyphs">DAV1420_MM_80kD_direct_load_20140304_OT</text>
</svg>
</body></html>
